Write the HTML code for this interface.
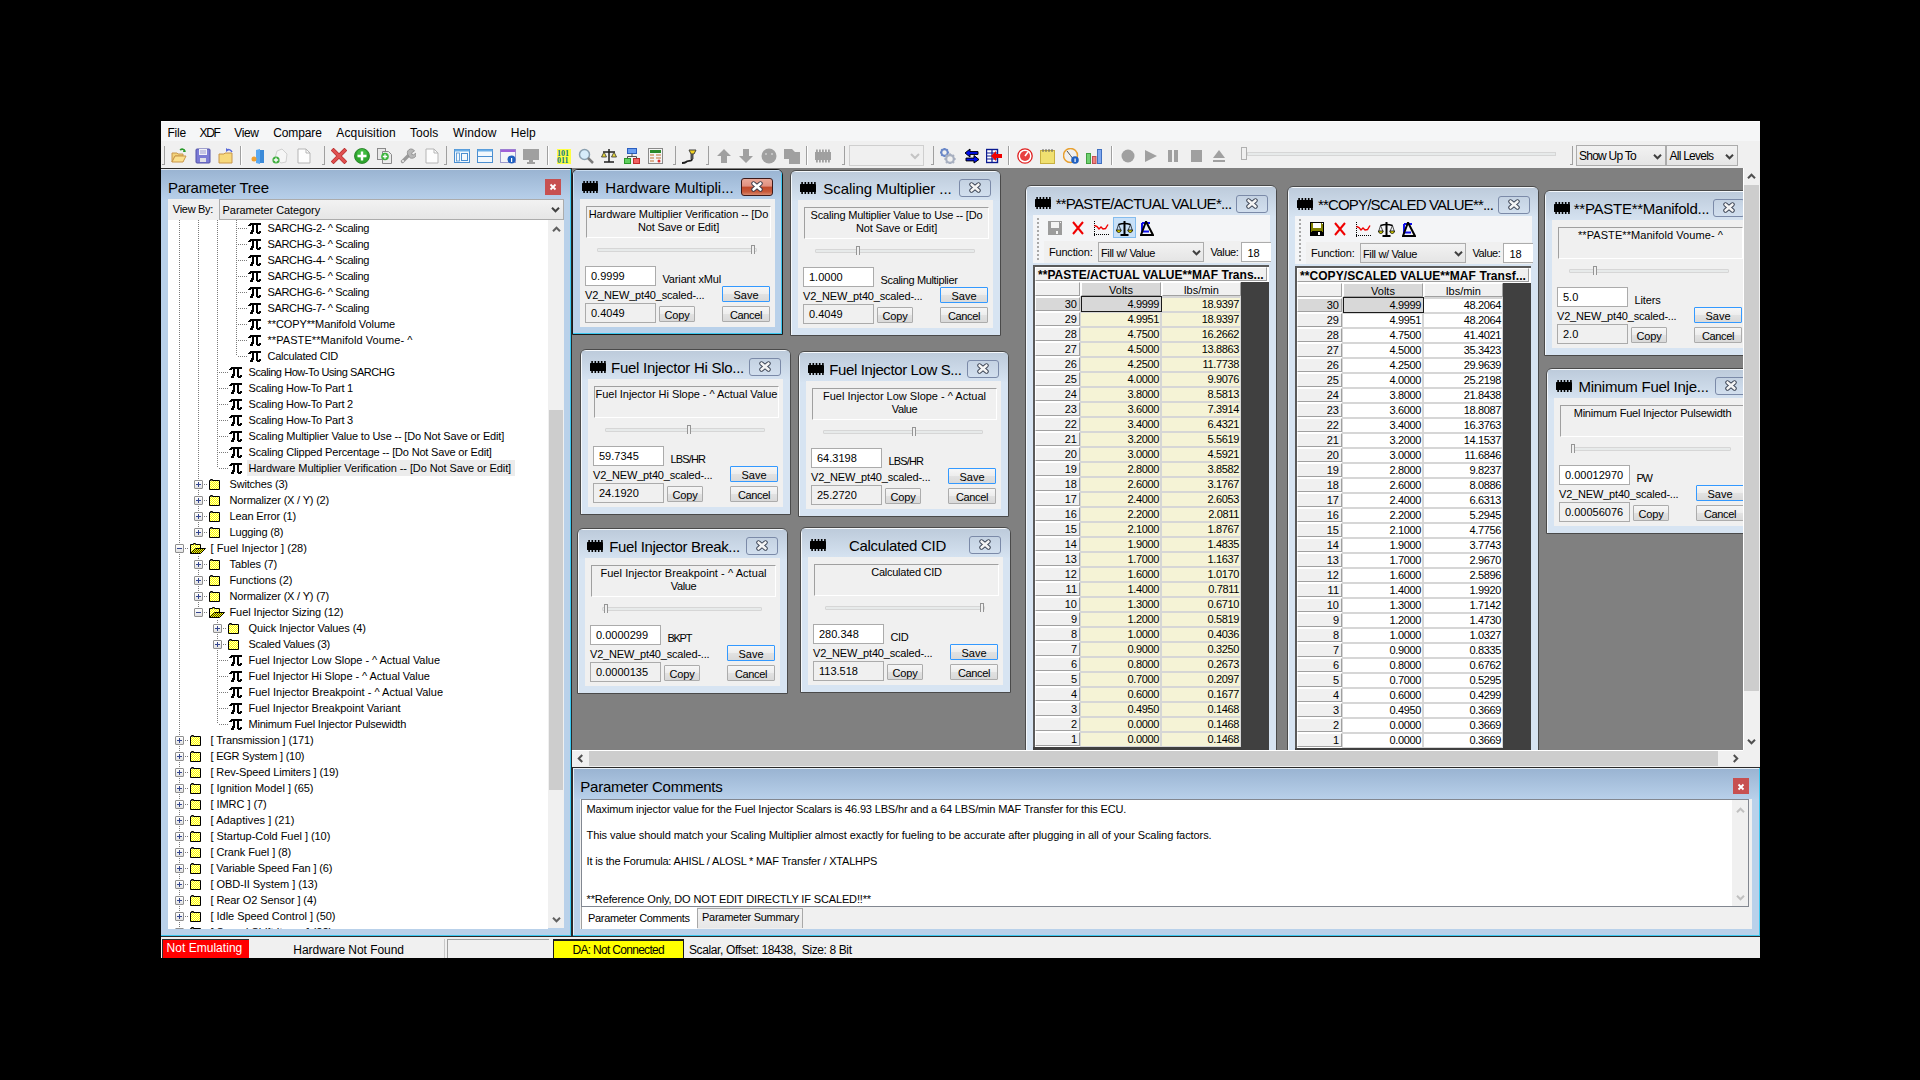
<!DOCTYPE html><html><head><meta charset="utf-8"><style>
html,body{margin:0;padding:0;width:1920px;height:1080px;overflow:hidden;background:#000}
div{position:absolute;box-sizing:border-box}
span{position:absolute;white-space:pre;font-family:"Liberation Sans",sans-serif;color:#000}
svg{position:absolute}
</style></head><body><div style="left:161px;top:121px;width:1599px;height:837px;background:#f0f0f0"></div><div style="left:161px;top:121px;width:1599px;height:20px;background:#f5f6f7;border-top:1px solid #fcfcfc"></div><span style="left:167.5px;top:127px;font-size:12px;line-height:12px;letter-spacing:-0.261px;">File</span><span style="left:199.6px;top:127px;font-size:12px;line-height:12px;letter-spacing:-1.333px;">XDF</span><span style="left:234.2px;top:127px;font-size:12px;line-height:12px;letter-spacing:-0.324px;">View</span><span style="left:273.3px;top:127px;font-size:12px;line-height:12px;letter-spacing:-0.137px;">Compare</span><span style="left:336.3px;top:127px;font-size:12px;line-height:12px;letter-spacing:0.134px;">Acquisition</span><span style="left:410px;top:127px;font-size:12px;line-height:12px;letter-spacing:0.057px;">Tools</span><span style="left:452.9px;top:127px;font-size:12px;line-height:12px;letter-spacing:0.185px;">Window</span><span style="left:510.8px;top:127px;font-size:12px;line-height:12px;letter-spacing:0.078px;">Help</span><div style="left:161px;top:141px;width:1599px;height:27px;background:#f0f0f0"></div><div style="left:240px;top:146px;width:1px;height:19px;background:#a0a0a0;border-right:1px solid #fff;width:2px"></div><div style="left:547px;top:146px;width:1px;height:19px;background:#a0a0a0;border-right:1px solid #fff;width:2px"></div><div style="left:806px;top:146px;width:1px;height:19px;background:#a0a0a0;border-right:1px solid #fff;width:2px"></div><div style="left:1008px;top:146px;width:1px;height:19px;background:#a0a0a0;border-right:1px solid #fff;width:2px"></div><div style="left:1111px;top:146px;width:1px;height:19px;background:#a0a0a0;border-right:1px solid #fff;width:2px"></div><div style="left:162px;top:146px;width:3px;height:19px;border-right:1px solid #a0a0a0;border-bottom:1px solid #a0a0a0"></div><div style="left:322px;top:146px;width:3px;height:19px;border-right:1px solid #a0a0a0;border-bottom:1px solid #a0a0a0"></div><div style="left:444px;top:146px;width:3px;height:19px;border-right:1px solid #a0a0a0;border-bottom:1px solid #a0a0a0"></div><div style="left:673px;top:146px;width:3px;height:19px;border-right:1px solid #a0a0a0;border-bottom:1px solid #a0a0a0"></div><div style="left:706px;top:146px;width:3px;height:19px;border-right:1px solid #a0a0a0;border-bottom:1px solid #a0a0a0"></div><div style="left:842px;top:146px;width:3px;height:19px;border-right:1px solid #a0a0a0;border-bottom:1px solid #a0a0a0"></div><div style="left:931px;top:146px;width:3px;height:19px;border-right:1px solid #a0a0a0;border-bottom:1px solid #a0a0a0"></div><div style="left:1570px;top:146px;width:3px;height:19px;border-right:1px solid #a0a0a0;border-bottom:1px solid #a0a0a0"></div><svg style="position:absolute;left:171px;top:148px;" width="16" height="16" viewBox="0 0 16 16"><path d="M1 5h5l1 1h5v2H4L1 14z" fill="#f3d37a" stroke="#c8964a"/><path d="M1 14l3-6h11l-3 6z" fill="#fbe08e" stroke="#c8964a"/><path d="M9 2c2-1.5 4-1 5 1" fill="none" stroke="#2a9a2a" stroke-width="1.5"/><path d="M13 1l2 3-3 0z" fill="#2a9a2a"/></svg><svg style="position:absolute;left:195px;top:148px;" width="16" height="16" viewBox="0 0 16 16"><rect x="1" y="1" width="14" height="14" rx="1" fill="#7b7bd6" stroke="#5151a8"/><rect x="4" y="1" width="8" height="6" fill="#f0f0f8"/><rect x="5" y="2.5" width="6" height="1" fill="#9a9ad0"/><rect x="5" y="4.5" width="6" height="1" fill="#9a9ad0"/><rect x="5" y="10" width="6" height="4" fill="#e0e0e8"/></svg><svg style="position:absolute;left:218px;top:148px;" width="16" height="16" viewBox="0 0 16 16"><path d="M1 6h5l1-1h7v10H1z" fill="#f7d97c" stroke="#c8964a"/><path d="M14 4c-1-2-3-3-5-2" fill="none" stroke="#5a6ad8" stroke-width="1.5"/><path d="M8 0l0 4 3-2z" fill="#5a6ad8"/></svg><svg style="position:absolute;left:250px;top:148px;" width="16" height="16" viewBox="0 0 16 16"><rect x="6" y="2" width="8" height="13" fill="#3c8ad8"/><path d="M6 2l4 -1v15l-4-1z" fill="#5aa8f0"/><circle cx="4" cy="11" r="2.5" fill="#f0a030"/></svg><svg style="position:absolute;left:272px;top:148px;" width="16" height="16" viewBox="0 0 16 16"><path d="M5 3l5-2 5 5-1 8-5 1-6-5z" fill="#f6f6f6" stroke="#d0d0d0"/><circle cx="4" cy="12" r="3.6" fill="#3fae3f"/><path d="M4 9.8v4.4M1.8 12h4.4" stroke="#fff" stroke-width="1.3"/></svg><svg style="position:absolute;left:296px;top:148px;" width="16" height="16" viewBox="0 0 16 16"><path d="M2 1h8l4 4v10H2z" fill="#fdfdfd" stroke="#b5b5b5"/><path d="M10 1v4h4" fill="none" stroke="#b5b5b5"/></svg><svg style="position:absolute;left:331px;top:148px;" width="16" height="16" viewBox="0 0 16 16"><path d="M2.5 2.5L13.5 13.5M13.5 2.5L2.5 13.5" stroke="#b83030" stroke-width="4" stroke-linecap="square"/><path d="M2.5 2.5L13.5 13.5M13.5 2.5L2.5 13.5" stroke="#e05050" stroke-width="2.6" stroke-linecap="square"/></svg><svg style="position:absolute;left:354px;top:148px;" width="16" height="16" viewBox="0 0 16 16"><circle cx="8" cy="8" r="7.5" fill="#2ea52e" stroke="#1f7a1f" stroke-width="0.8"/><circle cx="8" cy="6" r="5" fill="#4cc84c" opacity="0.6"/><path d="M8 3.5v9M3.5 8h9" stroke="#fff" stroke-width="2.4"/></svg><svg style="position:absolute;left:377px;top:148px;" width="16" height="16" viewBox="0 0 16 16"><rect x="0.5" y="0.5" width="8" height="11" fill="#e8e8e8" stroke="#8a8a8a"/><path d="M5.5 3.5h6l3 3v9h-9z" fill="#ececec" stroke="#8a8a8a"/><circle cx="8" cy="8.5" r="3.8" fill="#3cb43c"/><path d="M8 6.3v4.4M5.8 8.5h4.4" stroke="#fff" stroke-width="1.3"/></svg><svg style="position:absolute;left:400px;top:148px;" width="16" height="16" viewBox="0 0 16 16"><path d="M2.5 13.5L9 7" stroke="#9a9a9a" stroke-width="3.4" stroke-linecap="round"/><path d="M8.5 7.5a3.8 3.8 0 1 1 6-4.5l-2.6 1.6-0.2 1.8 1.8 0.4 2.3-1.6a3.8 3.8 0 0 1-7.3 2.3z" fill="#b8b8b8" stroke="#8a8a8a" stroke-width="0.8"/><circle cx="3" cy="13" r="1" fill="#f0f0f0"/></svg><svg style="position:absolute;left:424px;top:148px;" width="16" height="16" viewBox="0 0 16 16"><path d="M2 1h8l4 4v10H2z" fill="#fdfdfd" stroke="#b5b5b5"/><path d="M10 1v4h4" fill="none" stroke="#b5b5b5"/></svg><svg style="position:absolute;left:454px;top:148px;" width="16" height="16" viewBox="0 0 16 16"><rect x="0.5" y="1.5" width="15" height="13" fill="#f2f8fd" stroke="#4a8ed0"/><rect x="0.5" y="1.5" width="15" height="2" fill="#6aaee8"/><rect x="2.5" y="5" width="3" height="8" fill="none" stroke="#4a8ed0" stroke-width="0.8"/><rect x="7.5" y="5.5" width="6" height="7" fill="none" stroke="#4a8ed0"/></svg><svg style="position:absolute;left:477px;top:148px;" width="16" height="16" viewBox="0 0 16 16"><rect x="0.5" y="1.5" width="15" height="13" fill="#f2f8fd" stroke="#4a8ed0"/><rect x="0.5" y="1.5" width="15" height="2" fill="#6aaee8"/><path d="M0.5 8.5h15" stroke="#4a8ed0"/></svg><svg style="position:absolute;left:500px;top:148px;" width="16" height="16" viewBox="0 0 16 16"><rect x="0.5" y="1.5" width="15" height="13" fill="#f4f4f8" stroke="#9a9acc"/><rect x="0.5" y="1.5" width="15" height="2.5" fill="#a060d8"/><circle cx="11.5" cy="11.5" r="4" fill="#2060c0"/><rect x="11" y="10" width="1.2" height="4" fill="#fff"/></svg><svg style="position:absolute;left:523px;top:148px;" width="16" height="16" viewBox="0 0 16 16"><rect x="0" y="1" width="16" height="11" fill="#a0a0a0"/><rect x="6" y="12" width="4" height="2" fill="#a0a0a0"/><rect x="4" y="14" width="8" height="2" fill="#a0a0a0"/></svg><svg style="position:absolute;left:557px;top:148px;" width="16" height="16" viewBox="0 0 16 16"><rect x="0" y="1" width="14" height="15" fill="#ffff40"/><text x="0" y="7.5" font-family="Liberation Serif" font-size="8" font-weight="bold" fill="#0a7a8a">101</text><text x="0" y="15" font-family="Liberation Serif" font-size="8" font-weight="bold" fill="#0a7a8a">011</text></svg><svg style="position:absolute;left:578px;top:148px;" width="16" height="16" viewBox="0 0 16 16"><circle cx="6.5" cy="6.5" r="5" fill="#d6ecfa" stroke="#8aa0b0" stroke-width="1.5"/><path d="M10 10l5 5" stroke="#7a7a7a" stroke-width="2.5"/></svg><svg style="position:absolute;left:601px;top:148px;" width="16" height="16" viewBox="0 0 16 16"><path d="M8 1v13M3 14h10M2 4h12" stroke="#202020" stroke-width="1.5"/><path d="M0.5 9h5l-2.5-5z" fill="#e8d840" stroke="#303030" stroke-width="0.8"/><path d="M10.5 9h5l-2.5-5z" fill="#e8d840" stroke="#303030" stroke-width="0.8"/></svg><svg style="position:absolute;left:624px;top:148px;" width="16" height="16" viewBox="0 0 16 16"><rect x="3.5" y="0.5" width="9" height="5" fill="#6a9ef0" stroke="#2a5ec0"/><rect x="0.5" y="10.5" width="6" height="5" fill="#60d060" stroke="#2a9a2a"/><rect x="9.5" y="10.5" width="6" height="5" fill="#f06060" stroke="#c02a2a"/><path d="M8 5.5v3M3.5 8.5h9v2M3.5 8.5v2" fill="none" stroke="#505050"/></svg><svg style="position:absolute;left:648px;top:148px;" width="16" height="16" viewBox="0 0 16 16"><rect x="0.5" y="0.5" width="14" height="15" fill="#f4f4f4" stroke="#8a8a8a"/><rect x="2" y="2" width="11" height="3" fill="#2a8a2a"/><path d="M2 7h4M8 7h5M2 10h4M8 10h5M2 13h4" stroke="#c07030" stroke-width="1"/><circle cx="11" cy="13" r="1.5" fill="#e03030"/></svg><svg style="position:absolute;left:681px;top:148px;" width="17" height="16" viewBox="0 0 17 16"><path d="M8 2h7l-2 4h-3z" fill="#f0d020" stroke="#404040"/><path d="M11 6v5" stroke="#505050" stroke-width="3"/><path d="M11 11c0 3-4 1-6 3-1 1-3 1-4 1" fill="none" stroke="#202020" stroke-width="1.8"/></svg><svg style="position:absolute;left:716px;top:148px;" width="16" height="16" viewBox="0 0 16 16"><path d="M8 1l7 7h-4v7H5V8H1z" fill="#a0a0a0"/></svg><svg style="position:absolute;left:738px;top:148px;" width="16" height="16" viewBox="0 0 16 16"><path d="M8 15l7-7h-4V1H5v7H1z" fill="#a0a0a0"/></svg><svg style="position:absolute;left:761px;top:148px;" width="16" height="16" viewBox="0 0 16 16"><circle cx="8" cy="8" r="7.5" fill="#a0a0a0"/><circle cx="5" cy="6" r="0.8" fill="#f0f0f0"/><circle cx="11" cy="6" r="0.8" fill="#f0f0f0"/></svg><svg style="position:absolute;left:784px;top:148px;" width="16" height="16" viewBox="0 0 16 16"><path d="M0 1h8l3 3h5v12H5v-5H0z" fill="#a0a0a0"/></svg><svg style="position:absolute;left:815px;top:148px;" width="16" height="16" viewBox="0 0 16 16"><rect x="0" y="4" width="16" height="8" fill="#a0a0a0"/><rect x="1" y="1.5" width="1.8" height="13" fill="#a0a0a0"/><rect x="4" y="1.5" width="1.8" height="13" fill="#a0a0a0"/><rect x="7" y="1.5" width="1.8" height="13" fill="#a0a0a0"/><rect x="10" y="1.5" width="1.8" height="13" fill="#a0a0a0"/><rect x="13" y="1.5" width="1.8" height="13" fill="#a0a0a0"/></svg><div style="left:849px;top:145px;width:75px;height:21px;border:1px solid #cfcfcf;background:#f0f0f0"></div><svg style="position:absolute;left:909.0px;top:150.0px;" width="12" height="12" viewBox="0 0 12 12"><polyline points="2,4.0 6,8.0 10,4.0" fill="none" stroke="#c4c4c4" stroke-width="2"/></svg><svg style="position:absolute;left:940px;top:148px;" width="17" height="16" viewBox="0 0 17 16"><g transform="translate(4.5 4.5)"><circle r="3.2" fill="none" stroke="#6a88c8" stroke-width="2"/><rect x="-0.8" y="-4.6" width="1.6" height="1.8" fill="#6a88c8" transform="rotate(0)"/><rect x="-0.8" y="-4.6" width="1.6" height="1.8" fill="#6a88c8" transform="rotate(45)"/><rect x="-0.8" y="-4.6" width="1.6" height="1.8" fill="#6a88c8" transform="rotate(90)"/><rect x="-0.8" y="-4.6" width="1.6" height="1.8" fill="#6a88c8" transform="rotate(135)"/><rect x="-0.8" y="-4.6" width="1.6" height="1.8" fill="#6a88c8" transform="rotate(180)"/><rect x="-0.8" y="-4.6" width="1.6" height="1.8" fill="#6a88c8" transform="rotate(225)"/><rect x="-0.8" y="-4.6" width="1.6" height="1.8" fill="#6a88c8" transform="rotate(270)"/><rect x="-0.8" y="-4.6" width="1.6" height="1.8" fill="#6a88c8" transform="rotate(315)"/></g><g transform="translate(10 11)"><circle r="3.8" fill="none" stroke="#a8b0c0" stroke-width="2.2"/><rect x="-1" y="-5.6" width="2" height="2" fill="#a8b0c0" transform="rotate(0)"/><rect x="-1" y="-5.6" width="2" height="2" fill="#a8b0c0" transform="rotate(45)"/><rect x="-1" y="-5.6" width="2" height="2" fill="#a8b0c0" transform="rotate(90)"/><rect x="-1" y="-5.6" width="2" height="2" fill="#a8b0c0" transform="rotate(135)"/><rect x="-1" y="-5.6" width="2" height="2" fill="#a8b0c0" transform="rotate(180)"/><rect x="-1" y="-5.6" width="2" height="2" fill="#a8b0c0" transform="rotate(225)"/><rect x="-1" y="-5.6" width="2" height="2" fill="#a8b0c0" transform="rotate(270)"/><rect x="-1" y="-5.6" width="2" height="2" fill="#a8b0c0" transform="rotate(315)"/></g></svg><svg style="position:absolute;left:964px;top:148px;" width="16" height="16" viewBox="0 0 16 16"><path d="M1 5l5-4v2.6h8v2.8H6V9z" fill="#0010f0" stroke="#000" stroke-width="1"/><path d="M15 11.5l-5-4v2.6H2v2.8h8V15z" fill="#0010f0" stroke="#000" stroke-width="1"/></svg><svg style="position:absolute;left:986px;top:148px;" width="16" height="16" viewBox="0 0 16 16"><rect x="0.5" y="1.5" width="11" height="13" fill="#fff" stroke="#0a1a90" stroke-width="1.4"/><path d="M1 5h10M1 8h10M1 11h10M6 2v12" stroke="#0a1a90" stroke-width="1.2"/><path d="M5 8l5-5v3h6v4h-6v3z" fill="#f00000"/></svg><svg style="position:absolute;left:1017px;top:148px;" width="16" height="16" viewBox="0 0 16 16"><circle cx="8" cy="8" r="7.2" fill="#fff" stroke="#e02020" stroke-width="1.3"/><circle cx="8" cy="8" r="5" fill="#e84040"/><path d="M8 8l3-4" stroke="#fff" stroke-width="1.5"/></svg><svg style="position:absolute;left:1040px;top:148px;" width="16" height="16" viewBox="0 0 16 16"><rect x="0.5" y="2.5" width="14" height="13" fill="#f0e070" stroke="#c8b040"/><path d="M3 1v3M6 1v3M9 1v3M12 1v3" stroke="#606060"/></svg><svg style="position:absolute;left:1063px;top:148px;" width="16" height="16" viewBox="0 0 16 16"><circle cx="7.5" cy="7.5" r="7" fill="#f0f0f0" stroke="#e8a030" stroke-width="1.5"/><path d="M7.5 7.5L4 3M7.5 7.5l3 4" stroke="#505050"/><circle cx="12" cy="12" r="3.8" fill="#2060c0"/><rect x="11.5" y="10.5" width="1.2" height="3.5" fill="#fff"/></svg><svg style="position:absolute;left:1086px;top:148px;" width="16" height="16" viewBox="0 0 16 16"><rect x="0.5" y="5.5" width="4" height="10" fill="#70d070" stroke="#40a040"/><rect x="6.5" y="8.5" width="3.5" height="7" fill="#f08080" stroke="#c05050"/><rect x="11.5" y="1.5" width="4" height="14" fill="#80a8f0" stroke="#4070c0"/></svg><svg style="position:absolute;left:1121px;top:148px;" width="16" height="16" viewBox="0 0 16 16"><circle cx="7" cy="8" r="6.5" fill="#a0a0a0"/></svg><svg style="position:absolute;left:1144px;top:148px;" width="16" height="16" viewBox="0 0 16 16"><path d="M1 2l12 6-12 6z" fill="#a0a0a0"/></svg><svg style="position:absolute;left:1167px;top:148px;" width="16" height="16" viewBox="0 0 16 16"><rect x="1" y="2" width="4" height="12" fill="#a0a0a0"/><rect x="7" y="2" width="4" height="12" fill="#a0a0a0"/></svg><svg style="position:absolute;left:1191px;top:148px;" width="16" height="16" viewBox="0 0 16 16"><rect x="0" y="2" width="11" height="12" fill="#a0a0a0"/></svg><svg style="position:absolute;left:1212px;top:148px;" width="16" height="16" viewBox="0 0 16 16"><path d="M1 10l6-8 6 8z" fill="#a0a0a0"/><rect x="1" y="12" width="12" height="2" fill="#a0a0a0"/></svg><div style="left:1247px;top:152px;width:309px;height:4px;background:#e7eaea;border:1px solid #d6d6d6"></div><div style="left:1241px;top:147px;width:6px;height:13px;background:#f0f0f0;border:1px solid #b0b0b0"></div><div style="left:1576px;top:145px;width:90px;height:21px;border:1px solid #acacac;background:linear-gradient(#f2f2f2,#e5e5e5)"></div><span style="left:1579px;top:150px;font-size:12px;line-height:12px;letter-spacing:-0.748px;">Show Up To</span><svg style="position:absolute;left:1651.5px;top:150.5px;" width="11.0" height="11.0" viewBox="0 0 11.0 11.0"><polyline points="2,3.75 5.5,7.25 9.0,3.75" fill="none" stroke="#404040" stroke-width="2"/></svg><div style="left:1666px;top:145px;width:72px;height:21px;border:1px solid #acacac;background:linear-gradient(#f2f2f2,#e5e5e5)"></div><span style="left:1669.6px;top:150px;font-size:12px;line-height:12px;letter-spacing:-0.766px;">All Levels</span><svg style="position:absolute;left:1723.5px;top:150.5px;" width="11.0" height="11.0" viewBox="0 0 11.0 11.0"><polyline points="2,3.75 5.5,7.25 9.0,3.75" fill="none" stroke="#404040" stroke-width="2"/></svg><div style="left:161px;top:169px;width:411px;height:767px;background:#b9d1ea"></div><div style="left:161px;top:169px;width:411px;height:31px;background:linear-gradient(#9ab4d2,#b8d0ea);border-top:1px solid #e4ecf6"></div><div style="left:570px;top:169px;width:1px;height:767px;background:#3cc8f0"></div><div style="left:161px;top:935px;width:411px;height:1px;background:#3cc8f0"></div><div style="left:571px;top:168px;width:2px;height:768px;background:#2a2a2a"></div><div style="left:161px;top:936px;width:411px;height:1px;background:#2a2a2a"></div><div style="left:161px;top:168px;width:411px;height:1px;background:#2a2a2a"></div><span style="left:168px;top:180px;font-size:15px;line-height:15px;letter-spacing:-0.248px;">Parameter Tree</span><div style="left:545px;top:179px;width:16px;height:16px;background:#c75050"></div><svg style="position:absolute;left:549px;top:183px;" width="8" height="8" viewBox="0 0 8 8"><path d="M1.5 1.5l5 5M6.5 1.5l-5 5" stroke="#fff" stroke-width="1.8"/></svg><div style="left:168px;top:199px;width:396px;height:21px;background:#f0f0f0"></div><span style="left:172.8px;top:204px;font-size:11px;line-height:11px;letter-spacing:-0.287px;">View By:</span><div style="left:219px;top:199px;width:345px;height:21px;border:1px solid #acacac;background:linear-gradient(#f2f2f2,#e6e6e6)"></div><span style="left:222.6px;top:204.5px;font-size:11px;line-height:11px;letter-spacing:-0.086px;">Parameter Category</span><svg style="position:absolute;left:550.0px;top:204.0px;" width="11.0" height="11.0" viewBox="0 0 11.0 11.0"><polyline points="2,3.75 5.5,7.25 9.0,3.75" fill="none" stroke="#404040" stroke-width="2"/></svg><div style="left:168px;top:220px;width:380px;height:709px;background:#fff;overflow:hidden"><div style="left:11px;top:0px;width:1px;height:708px;background:repeating-linear-gradient(to bottom,#7a7a7a 0,#7a7a7a 1px,transparent 1px,transparent 2px)"></div><div style="left:30px;top:0px;width:1px;height:312px;background:repeating-linear-gradient(to bottom,#7a7a7a 0,#7a7a7a 1px,transparent 1px,transparent 2px)"></div><div style="left:30px;top:336px;width:1px;height:56px;background:repeating-linear-gradient(to bottom,#7a7a7a 0,#7a7a7a 1px,transparent 1px,transparent 2px)"></div><div style="left:49px;top:0px;width:1px;height:248px;background:repeating-linear-gradient(to bottom,#7a7a7a 0,#7a7a7a 1px,transparent 1px,transparent 2px)"></div><div style="left:49px;top:400px;width:1px;height:104px;background:repeating-linear-gradient(to bottom,#7a7a7a 0,#7a7a7a 1px,transparent 1px,transparent 2px)"></div><div style="left:68px;top:0px;width:1px;height:136px;background:repeating-linear-gradient(to bottom,#7a7a7a 0,#7a7a7a 1px,transparent 1px,transparent 2px)"></div><div style="left:70px;top:8px;width:9px;height:1px;background:repeating-linear-gradient(to right,#7a7a7a 0,#7a7a7a 1px,transparent 1px,transparent 2px)"></div><svg style="position:absolute;left:80px;top:2px;shape-rendering:crispEdges" width="14" height="13" viewBox="0 0 14 13"><g fill="#000" shape-rendering="crispEdges"><rect x="2" y="1" width="11" height="2"/><rect x="1" y="2" width="2" height="1"/><rect x="0" y="3" width="3" height="1"/><rect x="4" y="3" width="2" height="5"/><rect x="3" y="8" width="3" height="2"/><rect x="2" y="10" width="3" height="2"/><rect x="8" y="3" width="2" height="8"/><rect x="9" y="10" width="3" height="2"/><rect x="11" y="9" width="2" height="2"/></g></svg><span style="left:99.5px;top:3px;font-size:11px;line-height:11px;letter-spacing:-0.335px;">SARCHG-2- ^ Scaling</span><div style="left:70px;top:24px;width:9px;height:1px;background:repeating-linear-gradient(to right,#7a7a7a 0,#7a7a7a 1px,transparent 1px,transparent 2px)"></div><svg style="position:absolute;left:80px;top:18px;shape-rendering:crispEdges" width="14" height="13" viewBox="0 0 14 13"><g fill="#000" shape-rendering="crispEdges"><rect x="2" y="1" width="11" height="2"/><rect x="1" y="2" width="2" height="1"/><rect x="0" y="3" width="3" height="1"/><rect x="4" y="3" width="2" height="5"/><rect x="3" y="8" width="3" height="2"/><rect x="2" y="10" width="3" height="2"/><rect x="8" y="3" width="2" height="8"/><rect x="9" y="10" width="3" height="2"/><rect x="11" y="9" width="2" height="2"/></g></svg><span style="left:99.5px;top:19px;font-size:11px;line-height:11px;letter-spacing:-0.335px;">SARCHG-3- ^ Scaling</span><div style="left:70px;top:40px;width:9px;height:1px;background:repeating-linear-gradient(to right,#7a7a7a 0,#7a7a7a 1px,transparent 1px,transparent 2px)"></div><svg style="position:absolute;left:80px;top:34px;shape-rendering:crispEdges" width="14" height="13" viewBox="0 0 14 13"><g fill="#000" shape-rendering="crispEdges"><rect x="2" y="1" width="11" height="2"/><rect x="1" y="2" width="2" height="1"/><rect x="0" y="3" width="3" height="1"/><rect x="4" y="3" width="2" height="5"/><rect x="3" y="8" width="3" height="2"/><rect x="2" y="10" width="3" height="2"/><rect x="8" y="3" width="2" height="8"/><rect x="9" y="10" width="3" height="2"/><rect x="11" y="9" width="2" height="2"/></g></svg><span style="left:99.5px;top:35px;font-size:11px;line-height:11px;letter-spacing:-0.335px;">SARCHG-4- ^ Scaling</span><div style="left:70px;top:56px;width:9px;height:1px;background:repeating-linear-gradient(to right,#7a7a7a 0,#7a7a7a 1px,transparent 1px,transparent 2px)"></div><svg style="position:absolute;left:80px;top:50px;shape-rendering:crispEdges" width="14" height="13" viewBox="0 0 14 13"><g fill="#000" shape-rendering="crispEdges"><rect x="2" y="1" width="11" height="2"/><rect x="1" y="2" width="2" height="1"/><rect x="0" y="3" width="3" height="1"/><rect x="4" y="3" width="2" height="5"/><rect x="3" y="8" width="3" height="2"/><rect x="2" y="10" width="3" height="2"/><rect x="8" y="3" width="2" height="8"/><rect x="9" y="10" width="3" height="2"/><rect x="11" y="9" width="2" height="2"/></g></svg><span style="left:99.5px;top:51px;font-size:11px;line-height:11px;letter-spacing:-0.335px;">SARCHG-5- ^ Scaling</span><div style="left:70px;top:72px;width:9px;height:1px;background:repeating-linear-gradient(to right,#7a7a7a 0,#7a7a7a 1px,transparent 1px,transparent 2px)"></div><svg style="position:absolute;left:80px;top:66px;shape-rendering:crispEdges" width="14" height="13" viewBox="0 0 14 13"><g fill="#000" shape-rendering="crispEdges"><rect x="2" y="1" width="11" height="2"/><rect x="1" y="2" width="2" height="1"/><rect x="0" y="3" width="3" height="1"/><rect x="4" y="3" width="2" height="5"/><rect x="3" y="8" width="3" height="2"/><rect x="2" y="10" width="3" height="2"/><rect x="8" y="3" width="2" height="8"/><rect x="9" y="10" width="3" height="2"/><rect x="11" y="9" width="2" height="2"/></g></svg><span style="left:99.5px;top:67px;font-size:11px;line-height:11px;letter-spacing:-0.335px;">SARCHG-6- ^ Scaling</span><div style="left:70px;top:88px;width:9px;height:1px;background:repeating-linear-gradient(to right,#7a7a7a 0,#7a7a7a 1px,transparent 1px,transparent 2px)"></div><svg style="position:absolute;left:80px;top:82px;shape-rendering:crispEdges" width="14" height="13" viewBox="0 0 14 13"><g fill="#000" shape-rendering="crispEdges"><rect x="2" y="1" width="11" height="2"/><rect x="1" y="2" width="2" height="1"/><rect x="0" y="3" width="3" height="1"/><rect x="4" y="3" width="2" height="5"/><rect x="3" y="8" width="3" height="2"/><rect x="2" y="10" width="3" height="2"/><rect x="8" y="3" width="2" height="8"/><rect x="9" y="10" width="3" height="2"/><rect x="11" y="9" width="2" height="2"/></g></svg><span style="left:99.5px;top:83px;font-size:11px;line-height:11px;letter-spacing:-0.335px;">SARCHG-7- ^ Scaling</span><div style="left:70px;top:104px;width:9px;height:1px;background:repeating-linear-gradient(to right,#7a7a7a 0,#7a7a7a 1px,transparent 1px,transparent 2px)"></div><svg style="position:absolute;left:80px;top:98px;shape-rendering:crispEdges" width="14" height="13" viewBox="0 0 14 13"><g fill="#000" shape-rendering="crispEdges"><rect x="2" y="1" width="11" height="2"/><rect x="1" y="2" width="2" height="1"/><rect x="0" y="3" width="3" height="1"/><rect x="4" y="3" width="2" height="5"/><rect x="3" y="8" width="3" height="2"/><rect x="2" y="10" width="3" height="2"/><rect x="8" y="3" width="2" height="8"/><rect x="9" y="10" width="3" height="2"/><rect x="11" y="9" width="2" height="2"/></g></svg><span style="left:99.5px;top:99px;font-size:11px;line-height:11px;letter-spacing:-0.092px;">**COPY**Manifold Volume</span><div style="left:70px;top:120px;width:9px;height:1px;background:repeating-linear-gradient(to right,#7a7a7a 0,#7a7a7a 1px,transparent 1px,transparent 2px)"></div><svg style="position:absolute;left:80px;top:114px;shape-rendering:crispEdges" width="14" height="13" viewBox="0 0 14 13"><g fill="#000" shape-rendering="crispEdges"><rect x="2" y="1" width="11" height="2"/><rect x="1" y="2" width="2" height="1"/><rect x="0" y="3" width="3" height="1"/><rect x="4" y="3" width="2" height="5"/><rect x="3" y="8" width="3" height="2"/><rect x="2" y="10" width="3" height="2"/><rect x="8" y="3" width="2" height="8"/><rect x="9" y="10" width="3" height="2"/><rect x="11" y="9" width="2" height="2"/></g></svg><span style="left:99.5px;top:115px;font-size:11px;line-height:11px;letter-spacing:0.072px;">**PASTE**Manifold Voume- ^</span><div style="left:70px;top:136px;width:9px;height:1px;background:repeating-linear-gradient(to right,#7a7a7a 0,#7a7a7a 1px,transparent 1px,transparent 2px)"></div><svg style="position:absolute;left:80px;top:130px;shape-rendering:crispEdges" width="14" height="13" viewBox="0 0 14 13"><g fill="#000" shape-rendering="crispEdges"><rect x="2" y="1" width="11" height="2"/><rect x="1" y="2" width="2" height="1"/><rect x="0" y="3" width="3" height="1"/><rect x="4" y="3" width="2" height="5"/><rect x="3" y="8" width="3" height="2"/><rect x="2" y="10" width="3" height="2"/><rect x="8" y="3" width="2" height="8"/><rect x="9" y="10" width="3" height="2"/><rect x="11" y="9" width="2" height="2"/></g></svg><span style="left:99.5px;top:131px;font-size:11px;line-height:11px;letter-spacing:-0.249px;">Calculated CID</span><div style="left:51px;top:152px;width:9px;height:1px;background:repeating-linear-gradient(to right,#7a7a7a 0,#7a7a7a 1px,transparent 1px,transparent 2px)"></div><svg style="position:absolute;left:61px;top:146px;shape-rendering:crispEdges" width="14" height="13" viewBox="0 0 14 13"><g fill="#000" shape-rendering="crispEdges"><rect x="2" y="1" width="11" height="2"/><rect x="1" y="2" width="2" height="1"/><rect x="0" y="3" width="3" height="1"/><rect x="4" y="3" width="2" height="5"/><rect x="3" y="8" width="3" height="2"/><rect x="2" y="10" width="3" height="2"/><rect x="8" y="3" width="2" height="8"/><rect x="9" y="10" width="3" height="2"/><rect x="11" y="9" width="2" height="2"/></g></svg><span style="left:80.5px;top:147px;font-size:11px;line-height:11px;letter-spacing:-0.434px;">Scaling How-To Using SARCHG</span><div style="left:51px;top:168px;width:9px;height:1px;background:repeating-linear-gradient(to right,#7a7a7a 0,#7a7a7a 1px,transparent 1px,transparent 2px)"></div><svg style="position:absolute;left:61px;top:162px;shape-rendering:crispEdges" width="14" height="13" viewBox="0 0 14 13"><g fill="#000" shape-rendering="crispEdges"><rect x="2" y="1" width="11" height="2"/><rect x="1" y="2" width="2" height="1"/><rect x="0" y="3" width="3" height="1"/><rect x="4" y="3" width="2" height="5"/><rect x="3" y="8" width="3" height="2"/><rect x="2" y="10" width="3" height="2"/><rect x="8" y="3" width="2" height="8"/><rect x="9" y="10" width="3" height="2"/><rect x="11" y="9" width="2" height="2"/></g></svg><span style="left:80.5px;top:163px;font-size:11px;line-height:11px;letter-spacing:-0.206px;">Scaling How-To Part 1</span><div style="left:51px;top:184px;width:9px;height:1px;background:repeating-linear-gradient(to right,#7a7a7a 0,#7a7a7a 1px,transparent 1px,transparent 2px)"></div><svg style="position:absolute;left:61px;top:178px;shape-rendering:crispEdges" width="14" height="13" viewBox="0 0 14 13"><g fill="#000" shape-rendering="crispEdges"><rect x="2" y="1" width="11" height="2"/><rect x="1" y="2" width="2" height="1"/><rect x="0" y="3" width="3" height="1"/><rect x="4" y="3" width="2" height="5"/><rect x="3" y="8" width="3" height="2"/><rect x="2" y="10" width="3" height="2"/><rect x="8" y="3" width="2" height="8"/><rect x="9" y="10" width="3" height="2"/><rect x="11" y="9" width="2" height="2"/></g></svg><span style="left:80.5px;top:179px;font-size:11px;line-height:11px;letter-spacing:-0.206px;">Scaling How-To Part 2</span><div style="left:51px;top:200px;width:9px;height:1px;background:repeating-linear-gradient(to right,#7a7a7a 0,#7a7a7a 1px,transparent 1px,transparent 2px)"></div><svg style="position:absolute;left:61px;top:194px;shape-rendering:crispEdges" width="14" height="13" viewBox="0 0 14 13"><g fill="#000" shape-rendering="crispEdges"><rect x="2" y="1" width="11" height="2"/><rect x="1" y="2" width="2" height="1"/><rect x="0" y="3" width="3" height="1"/><rect x="4" y="3" width="2" height="5"/><rect x="3" y="8" width="3" height="2"/><rect x="2" y="10" width="3" height="2"/><rect x="8" y="3" width="2" height="8"/><rect x="9" y="10" width="3" height="2"/><rect x="11" y="9" width="2" height="2"/></g></svg><span style="left:80.5px;top:195px;font-size:11px;line-height:11px;letter-spacing:-0.206px;">Scaling How-To Part 3</span><div style="left:51px;top:216px;width:9px;height:1px;background:repeating-linear-gradient(to right,#7a7a7a 0,#7a7a7a 1px,transparent 1px,transparent 2px)"></div><svg style="position:absolute;left:61px;top:210px;shape-rendering:crispEdges" width="14" height="13" viewBox="0 0 14 13"><g fill="#000" shape-rendering="crispEdges"><rect x="2" y="1" width="11" height="2"/><rect x="1" y="2" width="2" height="1"/><rect x="0" y="3" width="3" height="1"/><rect x="4" y="3" width="2" height="5"/><rect x="3" y="8" width="3" height="2"/><rect x="2" y="10" width="3" height="2"/><rect x="8" y="3" width="2" height="8"/><rect x="9" y="10" width="3" height="2"/><rect x="11" y="9" width="2" height="2"/></g></svg><span style="left:80.5px;top:211px;font-size:11px;line-height:11px;letter-spacing:-0.170px;">Scaling Multiplier Value to Use -- [Do Not Save or Edit]</span><div style="left:51px;top:232px;width:9px;height:1px;background:repeating-linear-gradient(to right,#7a7a7a 0,#7a7a7a 1px,transparent 1px,transparent 2px)"></div><svg style="position:absolute;left:61px;top:226px;shape-rendering:crispEdges" width="14" height="13" viewBox="0 0 14 13"><g fill="#000" shape-rendering="crispEdges"><rect x="2" y="1" width="11" height="2"/><rect x="1" y="2" width="2" height="1"/><rect x="0" y="3" width="3" height="1"/><rect x="4" y="3" width="2" height="5"/><rect x="3" y="8" width="3" height="2"/><rect x="2" y="10" width="3" height="2"/><rect x="8" y="3" width="2" height="8"/><rect x="9" y="10" width="3" height="2"/><rect x="11" y="9" width="2" height="2"/></g></svg><span style="left:80.5px;top:227px;font-size:11px;line-height:11px;letter-spacing:-0.183px;">Scaling Clipped Percentage -- [Do Not Save or Edit]</span><div style="left:51px;top:248px;width:9px;height:1px;background:repeating-linear-gradient(to right,#7a7a7a 0,#7a7a7a 1px,transparent 1px,transparent 2px)"></div><svg style="position:absolute;left:61px;top:242px;shape-rendering:crispEdges" width="14" height="13" viewBox="0 0 14 13"><g fill="#000" shape-rendering="crispEdges"><rect x="2" y="1" width="11" height="2"/><rect x="1" y="2" width="2" height="1"/><rect x="0" y="3" width="3" height="1"/><rect x="4" y="3" width="2" height="5"/><rect x="3" y="8" width="3" height="2"/><rect x="2" y="10" width="3" height="2"/><rect x="8" y="3" width="2" height="8"/><rect x="9" y="10" width="3" height="2"/><rect x="11" y="9" width="2" height="2"/></g></svg><div style="left:79px;top:240px;width:268px;height:16px;background:#ececec"></div><span style="left:80.5px;top:243px;font-size:11px;line-height:11px;letter-spacing:-0.102px;">Hardware Multiplier Verification -- [Do Not Save or Edit]</span><div style="left:26px;top:260px;width:9px;height:9px;border:1px solid #8f8f8f;background:linear-gradient(#fff,#e2e2e2);border-radius:1px"></div><div style="left:28px;top:264px;width:5px;height:1px;background:#34468f"></div><div style="left:30px;top:262px;width:1px;height:5px;background:#34468f"></div><div style="left:36px;top:264px;width:4px;height:1px;background:repeating-linear-gradient(to right,#7a7a7a 0,#7a7a7a 1px,transparent 1px,transparent 2px)"></div><svg style="position:absolute;left:40px;top:257px;" width="14" height="14" viewBox="0 0 14 14"><defs><pattern id="dith" width="2" height="2" patternUnits="userSpaceOnUse"><rect width="2" height="2" fill="#ffff00"/><rect width="1" height="1" fill="#ffffc0"/><rect x="1" y="1" width="1" height="1" fill="#ffffc0"/></pattern></defs><path d="M1.5 12.5V3.5h10v9z" fill="url(#dith)" stroke="#000"/><path d="M2.5 3.5V2.5h2v1" fill="#ffffc0" stroke="#000"/></svg><span style="left:61.5px;top:259px;font-size:11px;line-height:11px;letter-spacing:-0.186px;">Switches (3)</span><div style="left:26px;top:276px;width:9px;height:9px;border:1px solid #8f8f8f;background:linear-gradient(#fff,#e2e2e2);border-radius:1px"></div><div style="left:28px;top:280px;width:5px;height:1px;background:#34468f"></div><div style="left:30px;top:278px;width:1px;height:5px;background:#34468f"></div><div style="left:36px;top:280px;width:4px;height:1px;background:repeating-linear-gradient(to right,#7a7a7a 0,#7a7a7a 1px,transparent 1px,transparent 2px)"></div><svg style="position:absolute;left:40px;top:273px;" width="14" height="14" viewBox="0 0 14 14"><defs><pattern id="dith" width="2" height="2" patternUnits="userSpaceOnUse"><rect width="2" height="2" fill="#ffff00"/><rect width="1" height="1" fill="#ffffc0"/><rect x="1" y="1" width="1" height="1" fill="#ffffc0"/></pattern></defs><path d="M1.5 12.5V3.5h10v9z" fill="url(#dith)" stroke="#000"/><path d="M2.5 3.5V2.5h2v1" fill="#ffffc0" stroke="#000"/></svg><span style="left:61.5px;top:275px;font-size:11px;line-height:11px;letter-spacing:-0.191px;">Normalizer (X / Y) (2)</span><div style="left:26px;top:292px;width:9px;height:9px;border:1px solid #8f8f8f;background:linear-gradient(#fff,#e2e2e2);border-radius:1px"></div><div style="left:28px;top:296px;width:5px;height:1px;background:#34468f"></div><div style="left:30px;top:294px;width:1px;height:5px;background:#34468f"></div><div style="left:36px;top:296px;width:4px;height:1px;background:repeating-linear-gradient(to right,#7a7a7a 0,#7a7a7a 1px,transparent 1px,transparent 2px)"></div><svg style="position:absolute;left:40px;top:289px;" width="14" height="14" viewBox="0 0 14 14"><defs><pattern id="dith" width="2" height="2" patternUnits="userSpaceOnUse"><rect width="2" height="2" fill="#ffff00"/><rect width="1" height="1" fill="#ffffc0"/><rect x="1" y="1" width="1" height="1" fill="#ffffc0"/></pattern></defs><path d="M1.5 12.5V3.5h10v9z" fill="url(#dith)" stroke="#000"/><path d="M2.5 3.5V2.5h2v1" fill="#ffffc0" stroke="#000"/></svg><span style="left:61.5px;top:291px;font-size:11px;line-height:11px;letter-spacing:-0.135px;">Lean Error (1)</span><div style="left:26px;top:308px;width:9px;height:9px;border:1px solid #8f8f8f;background:linear-gradient(#fff,#e2e2e2);border-radius:1px"></div><div style="left:28px;top:312px;width:5px;height:1px;background:#34468f"></div><div style="left:30px;top:310px;width:1px;height:5px;background:#34468f"></div><div style="left:36px;top:312px;width:4px;height:1px;background:repeating-linear-gradient(to right,#7a7a7a 0,#7a7a7a 1px,transparent 1px,transparent 2px)"></div><svg style="position:absolute;left:40px;top:305px;" width="14" height="14" viewBox="0 0 14 14"><defs><pattern id="dith" width="2" height="2" patternUnits="userSpaceOnUse"><rect width="2" height="2" fill="#ffff00"/><rect width="1" height="1" fill="#ffffc0"/><rect x="1" y="1" width="1" height="1" fill="#ffffc0"/></pattern></defs><path d="M1.5 12.5V3.5h10v9z" fill="url(#dith)" stroke="#000"/><path d="M2.5 3.5V2.5h2v1" fill="#ffffc0" stroke="#000"/></svg><span style="left:61.5px;top:307px;font-size:11px;line-height:11px;letter-spacing:-0.178px;">Lugging (8)</span><div style="left:7px;top:324px;width:9px;height:9px;border:1px solid #8f8f8f;background:linear-gradient(#fff,#e2e2e2);border-radius:1px"></div><div style="left:9px;top:328px;width:5px;height:1px;background:#34468f"></div><div style="left:17px;top:328px;width:4px;height:1px;background:repeating-linear-gradient(to right,#7a7a7a 0,#7a7a7a 1px,transparent 1px,transparent 2px)"></div><svg style="position:absolute;left:21px;top:322px;" width="18" height="13" viewBox="0 0 18 13"><defs><pattern id="dith2" width="2" height="2" patternUnits="userSpaceOnUse"><rect width="2" height="2" fill="#ffff00"/><rect width="1" height="1" fill="#404000"/><rect x="1" y="1" width="1" height="1" fill="#404000"/></pattern></defs><path d="M1.5 11.5V2.5h3v-1h2v1h5v4" fill="url(#dith)" stroke="#000"/><path d="M1.5 11.5h10l5-5h-10z" fill="url(#dith2)" stroke="#000"/></svg><span style="left:42.5px;top:323px;font-size:11px;line-height:11px;letter-spacing:0.051px;">[ Fuel Injector ] (28)</span><div style="left:26px;top:340px;width:9px;height:9px;border:1px solid #8f8f8f;background:linear-gradient(#fff,#e2e2e2);border-radius:1px"></div><div style="left:28px;top:344px;width:5px;height:1px;background:#34468f"></div><div style="left:30px;top:342px;width:1px;height:5px;background:#34468f"></div><div style="left:36px;top:344px;width:4px;height:1px;background:repeating-linear-gradient(to right,#7a7a7a 0,#7a7a7a 1px,transparent 1px,transparent 2px)"></div><svg style="position:absolute;left:40px;top:337px;" width="14" height="14" viewBox="0 0 14 14"><defs><pattern id="dith" width="2" height="2" patternUnits="userSpaceOnUse"><rect width="2" height="2" fill="#ffff00"/><rect width="1" height="1" fill="#ffffc0"/><rect x="1" y="1" width="1" height="1" fill="#ffffc0"/></pattern></defs><path d="M1.5 12.5V3.5h10v9z" fill="url(#dith)" stroke="#000"/><path d="M2.5 3.5V2.5h2v1" fill="#ffffc0" stroke="#000"/></svg><span style="left:61.5px;top:339px;font-size:11px;line-height:11px;letter-spacing:-0.060px;">Tables (7)</span><div style="left:26px;top:356px;width:9px;height:9px;border:1px solid #8f8f8f;background:linear-gradient(#fff,#e2e2e2);border-radius:1px"></div><div style="left:28px;top:360px;width:5px;height:1px;background:#34468f"></div><div style="left:30px;top:358px;width:1px;height:5px;background:#34468f"></div><div style="left:36px;top:360px;width:4px;height:1px;background:repeating-linear-gradient(to right,#7a7a7a 0,#7a7a7a 1px,transparent 1px,transparent 2px)"></div><svg style="position:absolute;left:40px;top:353px;" width="14" height="14" viewBox="0 0 14 14"><defs><pattern id="dith" width="2" height="2" patternUnits="userSpaceOnUse"><rect width="2" height="2" fill="#ffff00"/><rect width="1" height="1" fill="#ffffc0"/><rect x="1" y="1" width="1" height="1" fill="#ffffc0"/></pattern></defs><path d="M1.5 12.5V3.5h10v9z" fill="url(#dith)" stroke="#000"/><path d="M2.5 3.5V2.5h2v1" fill="#ffffc0" stroke="#000"/></svg><span style="left:61.5px;top:355px;font-size:11px;line-height:11px;letter-spacing:-0.116px;">Functions (2)</span><div style="left:26px;top:372px;width:9px;height:9px;border:1px solid #8f8f8f;background:linear-gradient(#fff,#e2e2e2);border-radius:1px"></div><div style="left:28px;top:376px;width:5px;height:1px;background:#34468f"></div><div style="left:30px;top:374px;width:1px;height:5px;background:#34468f"></div><div style="left:36px;top:376px;width:4px;height:1px;background:repeating-linear-gradient(to right,#7a7a7a 0,#7a7a7a 1px,transparent 1px,transparent 2px)"></div><svg style="position:absolute;left:40px;top:369px;" width="14" height="14" viewBox="0 0 14 14"><defs><pattern id="dith" width="2" height="2" patternUnits="userSpaceOnUse"><rect width="2" height="2" fill="#ffff00"/><rect width="1" height="1" fill="#ffffc0"/><rect x="1" y="1" width="1" height="1" fill="#ffffc0"/></pattern></defs><path d="M1.5 12.5V3.5h10v9z" fill="url(#dith)" stroke="#000"/><path d="M2.5 3.5V2.5h2v1" fill="#ffffc0" stroke="#000"/></svg><span style="left:61.5px;top:371px;font-size:11px;line-height:11px;letter-spacing:-0.191px;">Normalizer (X / Y) (7)</span><div style="left:26px;top:388px;width:9px;height:9px;border:1px solid #8f8f8f;background:linear-gradient(#fff,#e2e2e2);border-radius:1px"></div><div style="left:28px;top:392px;width:5px;height:1px;background:#34468f"></div><div style="left:36px;top:392px;width:4px;height:1px;background:repeating-linear-gradient(to right,#7a7a7a 0,#7a7a7a 1px,transparent 1px,transparent 2px)"></div><svg style="position:absolute;left:40px;top:386px;" width="18" height="13" viewBox="0 0 18 13"><defs><pattern id="dith2" width="2" height="2" patternUnits="userSpaceOnUse"><rect width="2" height="2" fill="#ffff00"/><rect width="1" height="1" fill="#404000"/><rect x="1" y="1" width="1" height="1" fill="#404000"/></pattern></defs><path d="M1.5 11.5V2.5h3v-1h2v1h5v4" fill="url(#dith)" stroke="#000"/><path d="M1.5 11.5h10l5-5h-10z" fill="url(#dith2)" stroke="#000"/></svg><span style="left:61.5px;top:387px;font-size:11px;line-height:11px;letter-spacing:-0.095px;">Fuel Injector Sizing (12)</span><div style="left:45px;top:404px;width:9px;height:9px;border:1px solid #8f8f8f;background:linear-gradient(#fff,#e2e2e2);border-radius:1px"></div><div style="left:47px;top:408px;width:5px;height:1px;background:#34468f"></div><div style="left:49px;top:406px;width:1px;height:5px;background:#34468f"></div><div style="left:55px;top:408px;width:4px;height:1px;background:repeating-linear-gradient(to right,#7a7a7a 0,#7a7a7a 1px,transparent 1px,transparent 2px)"></div><svg style="position:absolute;left:59px;top:401px;" width="14" height="14" viewBox="0 0 14 14"><defs><pattern id="dith" width="2" height="2" patternUnits="userSpaceOnUse"><rect width="2" height="2" fill="#ffff00"/><rect width="1" height="1" fill="#ffffc0"/><rect x="1" y="1" width="1" height="1" fill="#ffffc0"/></pattern></defs><path d="M1.5 12.5V3.5h10v9z" fill="url(#dith)" stroke="#000"/><path d="M2.5 3.5V2.5h2v1" fill="#ffffc0" stroke="#000"/></svg><span style="left:80.5px;top:403px;font-size:11px;line-height:11px;letter-spacing:-0.089px;">Quick Injector Values (4)</span><div style="left:45px;top:420px;width:9px;height:9px;border:1px solid #8f8f8f;background:linear-gradient(#fff,#e2e2e2);border-radius:1px"></div><div style="left:47px;top:424px;width:5px;height:1px;background:#34468f"></div><div style="left:49px;top:422px;width:1px;height:5px;background:#34468f"></div><div style="left:55px;top:424px;width:4px;height:1px;background:repeating-linear-gradient(to right,#7a7a7a 0,#7a7a7a 1px,transparent 1px,transparent 2px)"></div><svg style="position:absolute;left:59px;top:417px;" width="14" height="14" viewBox="0 0 14 14"><defs><pattern id="dith" width="2" height="2" patternUnits="userSpaceOnUse"><rect width="2" height="2" fill="#ffff00"/><rect width="1" height="1" fill="#ffffc0"/><rect x="1" y="1" width="1" height="1" fill="#ffffc0"/></pattern></defs><path d="M1.5 12.5V3.5h10v9z" fill="url(#dith)" stroke="#000"/><path d="M2.5 3.5V2.5h2v1" fill="#ffffc0" stroke="#000"/></svg><span style="left:80.5px;top:419px;font-size:11px;line-height:11px;letter-spacing:-0.266px;">Scaled Values (3)</span><div style="left:51px;top:440px;width:9px;height:1px;background:repeating-linear-gradient(to right,#7a7a7a 0,#7a7a7a 1px,transparent 1px,transparent 2px)"></div><svg style="position:absolute;left:61px;top:434px;shape-rendering:crispEdges" width="14" height="13" viewBox="0 0 14 13"><g fill="#000" shape-rendering="crispEdges"><rect x="2" y="1" width="11" height="2"/><rect x="1" y="2" width="2" height="1"/><rect x="0" y="3" width="3" height="1"/><rect x="4" y="3" width="2" height="5"/><rect x="3" y="8" width="3" height="2"/><rect x="2" y="10" width="3" height="2"/><rect x="8" y="3" width="2" height="8"/><rect x="9" y="10" width="3" height="2"/><rect x="11" y="9" width="2" height="2"/></g></svg><span style="left:80.5px;top:435px;font-size:11px;line-height:11px;letter-spacing:-0.045px;">Fuel Injector Low Slope - ^ Actual Value</span><div style="left:51px;top:456px;width:9px;height:1px;background:repeating-linear-gradient(to right,#7a7a7a 0,#7a7a7a 1px,transparent 1px,transparent 2px)"></div><svg style="position:absolute;left:61px;top:450px;shape-rendering:crispEdges" width="14" height="13" viewBox="0 0 14 13"><g fill="#000" shape-rendering="crispEdges"><rect x="2" y="1" width="11" height="2"/><rect x="1" y="2" width="2" height="1"/><rect x="0" y="3" width="3" height="1"/><rect x="4" y="3" width="2" height="5"/><rect x="3" y="8" width="3" height="2"/><rect x="2" y="10" width="3" height="2"/><rect x="8" y="3" width="2" height="8"/><rect x="9" y="10" width="3" height="2"/><rect x="11" y="9" width="2" height="2"/></g></svg><span style="left:80.5px;top:451px;font-size:11px;line-height:11px;letter-spacing:-0.054px;">Fuel Injector Hi Slope - ^ Actual Value</span><div style="left:51px;top:472px;width:9px;height:1px;background:repeating-linear-gradient(to right,#7a7a7a 0,#7a7a7a 1px,transparent 1px,transparent 2px)"></div><svg style="position:absolute;left:61px;top:466px;shape-rendering:crispEdges" width="14" height="13" viewBox="0 0 14 13"><g fill="#000" shape-rendering="crispEdges"><rect x="2" y="1" width="11" height="2"/><rect x="1" y="2" width="2" height="1"/><rect x="0" y="3" width="3" height="1"/><rect x="4" y="3" width="2" height="5"/><rect x="3" y="8" width="3" height="2"/><rect x="2" y="10" width="3" height="2"/><rect x="8" y="3" width="2" height="8"/><rect x="9" y="10" width="3" height="2"/><rect x="11" y="9" width="2" height="2"/></g></svg><span style="left:80.5px;top:467px;font-size:11px;line-height:11px;">Fuel Injector Breakpoint - ^ Actual Value</span><div style="left:51px;top:488px;width:9px;height:1px;background:repeating-linear-gradient(to right,#7a7a7a 0,#7a7a7a 1px,transparent 1px,transparent 2px)"></div><svg style="position:absolute;left:61px;top:482px;shape-rendering:crispEdges" width="14" height="13" viewBox="0 0 14 13"><g fill="#000" shape-rendering="crispEdges"><rect x="2" y="1" width="11" height="2"/><rect x="1" y="2" width="2" height="1"/><rect x="0" y="3" width="3" height="1"/><rect x="4" y="3" width="2" height="5"/><rect x="3" y="8" width="3" height="2"/><rect x="2" y="10" width="3" height="2"/><rect x="8" y="3" width="2" height="8"/><rect x="9" y="10" width="3" height="2"/><rect x="11" y="9" width="2" height="2"/></g></svg><span style="left:80.5px;top:483px;font-size:11px;line-height:11px;letter-spacing:-0.036px;">Fuel Injector Breakpoint Variant</span><div style="left:51px;top:504px;width:9px;height:1px;background:repeating-linear-gradient(to right,#7a7a7a 0,#7a7a7a 1px,transparent 1px,transparent 2px)"></div><svg style="position:absolute;left:61px;top:498px;shape-rendering:crispEdges" width="14" height="13" viewBox="0 0 14 13"><g fill="#000" shape-rendering="crispEdges"><rect x="2" y="1" width="11" height="2"/><rect x="1" y="2" width="2" height="1"/><rect x="0" y="3" width="3" height="1"/><rect x="4" y="3" width="2" height="5"/><rect x="3" y="8" width="3" height="2"/><rect x="2" y="10" width="3" height="2"/><rect x="8" y="3" width="2" height="8"/><rect x="9" y="10" width="3" height="2"/><rect x="11" y="9" width="2" height="2"/></g></svg><span style="left:80.5px;top:499px;font-size:11px;line-height:11px;letter-spacing:-0.214px;">Minimum Fuel Injector Pulsewidth</span><div style="left:7px;top:516px;width:9px;height:9px;border:1px solid #8f8f8f;background:linear-gradient(#fff,#e2e2e2);border-radius:1px"></div><div style="left:9px;top:520px;width:5px;height:1px;background:#34468f"></div><div style="left:11px;top:518px;width:1px;height:5px;background:#34468f"></div><div style="left:17px;top:520px;width:4px;height:1px;background:repeating-linear-gradient(to right,#7a7a7a 0,#7a7a7a 1px,transparent 1px,transparent 2px)"></div><svg style="position:absolute;left:21px;top:513px;" width="14" height="14" viewBox="0 0 14 14"><defs><pattern id="dith" width="2" height="2" patternUnits="userSpaceOnUse"><rect width="2" height="2" fill="#ffff00"/><rect width="1" height="1" fill="#ffffc0"/><rect x="1" y="1" width="1" height="1" fill="#ffffc0"/></pattern></defs><path d="M1.5 12.5V3.5h10v9z" fill="url(#dith)" stroke="#000"/><path d="M2.5 3.5V2.5h2v1" fill="#ffffc0" stroke="#000"/></svg><span style="left:42.5px;top:515px;font-size:11px;line-height:11px;letter-spacing:-0.126px;">[ Transmission ] (171)</span><div style="left:7px;top:532px;width:9px;height:9px;border:1px solid #8f8f8f;background:linear-gradient(#fff,#e2e2e2);border-radius:1px"></div><div style="left:9px;top:536px;width:5px;height:1px;background:#34468f"></div><div style="left:11px;top:534px;width:1px;height:5px;background:#34468f"></div><div style="left:17px;top:536px;width:4px;height:1px;background:repeating-linear-gradient(to right,#7a7a7a 0,#7a7a7a 1px,transparent 1px,transparent 2px)"></div><svg style="position:absolute;left:21px;top:529px;" width="14" height="14" viewBox="0 0 14 14"><defs><pattern id="dith" width="2" height="2" patternUnits="userSpaceOnUse"><rect width="2" height="2" fill="#ffff00"/><rect width="1" height="1" fill="#ffffc0"/><rect x="1" y="1" width="1" height="1" fill="#ffffc0"/></pattern></defs><path d="M1.5 12.5V3.5h10v9z" fill="url(#dith)" stroke="#000"/><path d="M2.5 3.5V2.5h2v1" fill="#ffffc0" stroke="#000"/></svg><span style="left:42.5px;top:531px;font-size:11px;line-height:11px;letter-spacing:-0.243px;">[ EGR System ] (10)</span><div style="left:7px;top:548px;width:9px;height:9px;border:1px solid #8f8f8f;background:linear-gradient(#fff,#e2e2e2);border-radius:1px"></div><div style="left:9px;top:552px;width:5px;height:1px;background:#34468f"></div><div style="left:11px;top:550px;width:1px;height:5px;background:#34468f"></div><div style="left:17px;top:552px;width:4px;height:1px;background:repeating-linear-gradient(to right,#7a7a7a 0,#7a7a7a 1px,transparent 1px,transparent 2px)"></div><svg style="position:absolute;left:21px;top:545px;" width="14" height="14" viewBox="0 0 14 14"><defs><pattern id="dith" width="2" height="2" patternUnits="userSpaceOnUse"><rect width="2" height="2" fill="#ffff00"/><rect width="1" height="1" fill="#ffffc0"/><rect x="1" y="1" width="1" height="1" fill="#ffffc0"/></pattern></defs><path d="M1.5 12.5V3.5h10v9z" fill="url(#dith)" stroke="#000"/><path d="M2.5 3.5V2.5h2v1" fill="#ffffc0" stroke="#000"/></svg><span style="left:42.5px;top:547px;font-size:11px;line-height:11px;letter-spacing:-0.127px;">[ Rev-Speed Limiters ] (19)</span><div style="left:7px;top:564px;width:9px;height:9px;border:1px solid #8f8f8f;background:linear-gradient(#fff,#e2e2e2);border-radius:1px"></div><div style="left:9px;top:568px;width:5px;height:1px;background:#34468f"></div><div style="left:11px;top:566px;width:1px;height:5px;background:#34468f"></div><div style="left:17px;top:568px;width:4px;height:1px;background:repeating-linear-gradient(to right,#7a7a7a 0,#7a7a7a 1px,transparent 1px,transparent 2px)"></div><svg style="position:absolute;left:21px;top:561px;" width="14" height="14" viewBox="0 0 14 14"><defs><pattern id="dith" width="2" height="2" patternUnits="userSpaceOnUse"><rect width="2" height="2" fill="#ffff00"/><rect width="1" height="1" fill="#ffffc0"/><rect x="1" y="1" width="1" height="1" fill="#ffffc0"/></pattern></defs><path d="M1.5 12.5V3.5h10v9z" fill="url(#dith)" stroke="#000"/><path d="M2.5 3.5V2.5h2v1" fill="#ffffc0" stroke="#000"/></svg><span style="left:42.5px;top:563px;font-size:11px;line-height:11px;letter-spacing:-0.015px;">[ Ignition Model ] (65)</span><div style="left:7px;top:580px;width:9px;height:9px;border:1px solid #8f8f8f;background:linear-gradient(#fff,#e2e2e2);border-radius:1px"></div><div style="left:9px;top:584px;width:5px;height:1px;background:#34468f"></div><div style="left:11px;top:582px;width:1px;height:5px;background:#34468f"></div><div style="left:17px;top:584px;width:4px;height:1px;background:repeating-linear-gradient(to right,#7a7a7a 0,#7a7a7a 1px,transparent 1px,transparent 2px)"></div><svg style="position:absolute;left:21px;top:577px;" width="14" height="14" viewBox="0 0 14 14"><defs><pattern id="dith" width="2" height="2" patternUnits="userSpaceOnUse"><rect width="2" height="2" fill="#ffff00"/><rect width="1" height="1" fill="#ffffc0"/><rect x="1" y="1" width="1" height="1" fill="#ffffc0"/></pattern></defs><path d="M1.5 12.5V3.5h10v9z" fill="url(#dith)" stroke="#000"/><path d="M2.5 3.5V2.5h2v1" fill="#ffffc0" stroke="#000"/></svg><span style="left:42.5px;top:579px;font-size:11px;line-height:11px;letter-spacing:-0.054px;">[ IMRC ] (7)</span><div style="left:7px;top:596px;width:9px;height:9px;border:1px solid #8f8f8f;background:linear-gradient(#fff,#e2e2e2);border-radius:1px"></div><div style="left:9px;top:600px;width:5px;height:1px;background:#34468f"></div><div style="left:11px;top:598px;width:1px;height:5px;background:#34468f"></div><div style="left:17px;top:600px;width:4px;height:1px;background:repeating-linear-gradient(to right,#7a7a7a 0,#7a7a7a 1px,transparent 1px,transparent 2px)"></div><svg style="position:absolute;left:21px;top:593px;" width="14" height="14" viewBox="0 0 14 14"><defs><pattern id="dith" width="2" height="2" patternUnits="userSpaceOnUse"><rect width="2" height="2" fill="#ffff00"/><rect width="1" height="1" fill="#ffffc0"/><rect x="1" y="1" width="1" height="1" fill="#ffffc0"/></pattern></defs><path d="M1.5 12.5V3.5h10v9z" fill="url(#dith)" stroke="#000"/><path d="M2.5 3.5V2.5h2v1" fill="#ffffc0" stroke="#000"/></svg><span style="left:42.5px;top:595px;font-size:11px;line-height:11px;letter-spacing:0.081px;">[ Adaptives ] (21)</span><div style="left:7px;top:612px;width:9px;height:9px;border:1px solid #8f8f8f;background:linear-gradient(#fff,#e2e2e2);border-radius:1px"></div><div style="left:9px;top:616px;width:5px;height:1px;background:#34468f"></div><div style="left:11px;top:614px;width:1px;height:5px;background:#34468f"></div><div style="left:17px;top:616px;width:4px;height:1px;background:repeating-linear-gradient(to right,#7a7a7a 0,#7a7a7a 1px,transparent 1px,transparent 2px)"></div><svg style="position:absolute;left:21px;top:609px;" width="14" height="14" viewBox="0 0 14 14"><defs><pattern id="dith" width="2" height="2" patternUnits="userSpaceOnUse"><rect width="2" height="2" fill="#ffff00"/><rect width="1" height="1" fill="#ffffc0"/><rect x="1" y="1" width="1" height="1" fill="#ffffc0"/></pattern></defs><path d="M1.5 12.5V3.5h10v9z" fill="url(#dith)" stroke="#000"/><path d="M2.5 3.5V2.5h2v1" fill="#ffffc0" stroke="#000"/></svg><span style="left:42.5px;top:611px;font-size:11px;line-height:11px;letter-spacing:-0.049px;">[ Startup-Cold Fuel ] (10)</span><div style="left:7px;top:628px;width:9px;height:9px;border:1px solid #8f8f8f;background:linear-gradient(#fff,#e2e2e2);border-radius:1px"></div><div style="left:9px;top:632px;width:5px;height:1px;background:#34468f"></div><div style="left:11px;top:630px;width:1px;height:5px;background:#34468f"></div><div style="left:17px;top:632px;width:4px;height:1px;background:repeating-linear-gradient(to right,#7a7a7a 0,#7a7a7a 1px,transparent 1px,transparent 2px)"></div><svg style="position:absolute;left:21px;top:625px;" width="14" height="14" viewBox="0 0 14 14"><defs><pattern id="dith" width="2" height="2" patternUnits="userSpaceOnUse"><rect width="2" height="2" fill="#ffff00"/><rect width="1" height="1" fill="#ffffc0"/><rect x="1" y="1" width="1" height="1" fill="#ffffc0"/></pattern></defs><path d="M1.5 12.5V3.5h10v9z" fill="url(#dith)" stroke="#000"/><path d="M2.5 3.5V2.5h2v1" fill="#ffffc0" stroke="#000"/></svg><span style="left:42.5px;top:627px;font-size:11px;line-height:11px;letter-spacing:-0.102px;">[ Crank Fuel ] (8)</span><div style="left:7px;top:644px;width:9px;height:9px;border:1px solid #8f8f8f;background:linear-gradient(#fff,#e2e2e2);border-radius:1px"></div><div style="left:9px;top:648px;width:5px;height:1px;background:#34468f"></div><div style="left:11px;top:646px;width:1px;height:5px;background:#34468f"></div><div style="left:17px;top:648px;width:4px;height:1px;background:repeating-linear-gradient(to right,#7a7a7a 0,#7a7a7a 1px,transparent 1px,transparent 2px)"></div><svg style="position:absolute;left:21px;top:641px;" width="14" height="14" viewBox="0 0 14 14"><defs><pattern id="dith" width="2" height="2" patternUnits="userSpaceOnUse"><rect width="2" height="2" fill="#ffff00"/><rect width="1" height="1" fill="#ffffc0"/><rect x="1" y="1" width="1" height="1" fill="#ffffc0"/></pattern></defs><path d="M1.5 12.5V3.5h10v9z" fill="url(#dith)" stroke="#000"/><path d="M2.5 3.5V2.5h2v1" fill="#ffffc0" stroke="#000"/></svg><span style="left:42.5px;top:643px;font-size:11px;line-height:11px;letter-spacing:-0.125px;">[ Variable Speed Fan ] (6)</span><div style="left:7px;top:660px;width:9px;height:9px;border:1px solid #8f8f8f;background:linear-gradient(#fff,#e2e2e2);border-radius:1px"></div><div style="left:9px;top:664px;width:5px;height:1px;background:#34468f"></div><div style="left:11px;top:662px;width:1px;height:5px;background:#34468f"></div><div style="left:17px;top:664px;width:4px;height:1px;background:repeating-linear-gradient(to right,#7a7a7a 0,#7a7a7a 1px,transparent 1px,transparent 2px)"></div><svg style="position:absolute;left:21px;top:657px;" width="14" height="14" viewBox="0 0 14 14"><defs><pattern id="dith" width="2" height="2" patternUnits="userSpaceOnUse"><rect width="2" height="2" fill="#ffff00"/><rect width="1" height="1" fill="#ffffc0"/><rect x="1" y="1" width="1" height="1" fill="#ffffc0"/></pattern></defs><path d="M1.5 12.5V3.5h10v9z" fill="url(#dith)" stroke="#000"/><path d="M2.5 3.5V2.5h2v1" fill="#ffffc0" stroke="#000"/></svg><span style="left:42.5px;top:659px;font-size:11px;line-height:11px;letter-spacing:-0.054px;">[ OBD-II System ] (13)</span><div style="left:7px;top:676px;width:9px;height:9px;border:1px solid #8f8f8f;background:linear-gradient(#fff,#e2e2e2);border-radius:1px"></div><div style="left:9px;top:680px;width:5px;height:1px;background:#34468f"></div><div style="left:11px;top:678px;width:1px;height:5px;background:#34468f"></div><div style="left:17px;top:680px;width:4px;height:1px;background:repeating-linear-gradient(to right,#7a7a7a 0,#7a7a7a 1px,transparent 1px,transparent 2px)"></div><svg style="position:absolute;left:21px;top:673px;" width="14" height="14" viewBox="0 0 14 14"><defs><pattern id="dith" width="2" height="2" patternUnits="userSpaceOnUse"><rect width="2" height="2" fill="#ffff00"/><rect width="1" height="1" fill="#ffffc0"/><rect x="1" y="1" width="1" height="1" fill="#ffffc0"/></pattern></defs><path d="M1.5 12.5V3.5h10v9z" fill="url(#dith)" stroke="#000"/><path d="M2.5 3.5V2.5h2v1" fill="#ffffc0" stroke="#000"/></svg><span style="left:42.5px;top:675px;font-size:11px;line-height:11px;letter-spacing:-0.101px;">[ Rear O2 Sensor ] (4)</span><div style="left:7px;top:692px;width:9px;height:9px;border:1px solid #8f8f8f;background:linear-gradient(#fff,#e2e2e2);border-radius:1px"></div><div style="left:9px;top:696px;width:5px;height:1px;background:#34468f"></div><div style="left:11px;top:694px;width:1px;height:5px;background:#34468f"></div><div style="left:17px;top:696px;width:4px;height:1px;background:repeating-linear-gradient(to right,#7a7a7a 0,#7a7a7a 1px,transparent 1px,transparent 2px)"></div><svg style="position:absolute;left:21px;top:689px;" width="14" height="14" viewBox="0 0 14 14"><defs><pattern id="dith" width="2" height="2" patternUnits="userSpaceOnUse"><rect width="2" height="2" fill="#ffff00"/><rect width="1" height="1" fill="#ffffc0"/><rect x="1" y="1" width="1" height="1" fill="#ffffc0"/></pattern></defs><path d="M1.5 12.5V3.5h10v9z" fill="url(#dith)" stroke="#000"/><path d="M2.5 3.5V2.5h2v1" fill="#ffffc0" stroke="#000"/></svg><span style="left:42.5px;top:691px;font-size:11px;line-height:11px;letter-spacing:-0.036px;">[ Idle Speed Control ] (50)</span><div style="left:7px;top:708px;width:9px;height:9px;border:1px solid #8f8f8f;background:linear-gradient(#fff,#e2e2e2);border-radius:1px"></div><div style="left:9px;top:712px;width:5px;height:1px;background:#34468f"></div><div style="left:11px;top:710px;width:1px;height:5px;background:#34468f"></div><div style="left:17px;top:712px;width:4px;height:1px;background:repeating-linear-gradient(to right,#7a7a7a 0,#7a7a7a 1px,transparent 1px,transparent 2px)"></div><svg style="position:absolute;left:21px;top:705px;" width="14" height="14" viewBox="0 0 14 14"><defs><pattern id="dith" width="2" height="2" patternUnits="userSpaceOnUse"><rect width="2" height="2" fill="#ffff00"/><rect width="1" height="1" fill="#ffffc0"/><rect x="1" y="1" width="1" height="1" fill="#ffffc0"/></pattern></defs><path d="M1.5 12.5V3.5h10v9z" fill="url(#dith)" stroke="#000"/><path d="M2.5 3.5V2.5h2v1" fill="#ffffc0" stroke="#000"/></svg><span style="left:42.5px;top:707px;font-size:11px;line-height:11px;">[ Speed Shift Items ] (22)</span></div><div style="left:548px;top:220px;width:16px;height:708px;background:#f0f0f0"></div><div style="left:549px;top:410px;width:14px;height:380px;background:#cdcdcd"></div><svg style="position:absolute;left:550.5px;top:223.5px;" width="11.0" height="11.0" viewBox="0 0 11.0 11.0"><polyline points="2,7.25 5.5,3.75 9.0,7.25" fill="none" stroke="#606060" stroke-width="2"/></svg><svg style="position:absolute;left:550.5px;top:913.5px;" width="11.0" height="11.0" viewBox="0 0 11.0 11.0"><polyline points="2,3.75 5.5,7.25 9.0,3.75" fill="none" stroke="#606060" stroke-width="2"/></svg><div style="left:572px;top:168px;width:1171px;height:582px;background:#808080"></div><div style="left:572px;top:168px;width:1171px;height:582px;overflow:hidden"><div style="left:0px;top:1px;width:211px;height:166px;background:#b9d1ea;border:1px solid #1a1a1a;border-radius:6px 6px 0 0;overflow:hidden"><div style="left:0;top:0;width:209px;height:30px;background:linear-gradient(#9ab4d2,#b8d0ea);box-shadow:inset 1px 1px 0 #c8dcf0"></div><div style="left:208px;top:0;width:1px;height:166px;background:#3cc8f0"></div><div style="left:0;top:163px;width:210px;height:1px;background:#3cc8f0"></div></div><svg style="position:absolute;left:9px;top:13px;" width="18" height="12" viewBox="0 0 18 12"><rect x="1" y="2" width="16" height="8" rx="0.5" fill="#000"/><rect x="2.3" y="0" width="1.6" height="2.2" fill="#000"/><rect x="2.3" y="9.8" width="1.6" height="2.2" fill="#000"/><rect x="5.5" y="0" width="1.6" height="2.2" fill="#000"/><rect x="5.5" y="9.8" width="1.6" height="2.2" fill="#000"/><rect x="8.7" y="0" width="1.6" height="2.2" fill="#000"/><rect x="8.7" y="9.8" width="1.6" height="2.2" fill="#000"/><rect x="11.9" y="0" width="1.6" height="2.2" fill="#000"/><rect x="11.9" y="9.8" width="1.6" height="2.2" fill="#000"/><rect x="15.1" y="0" width="1.6" height="2.2" fill="#000"/><rect x="15.1" y="9.8" width="1.6" height="2.2" fill="#000"/></svg><span style="left:26px;top:12px;font-size:15px;line-height:15px;width:143px;text-align:center;">Hardware Multipli...</span><div style="left:169px;top:10px;width:32px;height:18px;border:1px solid #3c1a1a;border-radius:3px;background:linear-gradient(#eaa898 0,#e09080 45%,#c0482a 50%,#c85a3a 80%,#d88a70 100%)"></div><svg style="position:absolute;left:179px;top:13px;" width="12" height="11" viewBox="0 0 12 11"><path d="M2.5 2.5l7 6M9.5 2.5l-7 6" stroke="#3a3a4a" stroke-width="4.4" stroke-linecap="round"/><path d="M2.5 2.5l7 6M9.5 2.5l-7 6" stroke="#fff" stroke-width="2.6" stroke-linecap="round"/></svg><div style="left:8px;top:31px;width:195px;height:128px;background:#f0f0f0"></div><div style="left:14px;top:38px;width:185px;height:32px;border-top:1px solid #a0a0a0;border-left:1px solid #a0a0a0;border-bottom:1px solid #fff;border-right:1px solid #fff"></div><span style="left:14px;top:41px;font-size:11px;line-height:11px;letter-spacing:-0.066px;width:185px;text-align:center;">Hardware Multiplier Verification -- [Do</span><span style="left:14px;top:54px;font-size:11px;line-height:11px;letter-spacing:-0.115px;width:185px;text-align:center;">Not Save or Edit]</span><div style="left:25px;top:80px;width:160px;height:4px;background:#e7eaea;border:1px solid #d6d6d6;border-radius:1px"></div><div style="left:179px;top:77px;width:4px;height:9px;background:#f0f0f0;border:1px solid #959595;border-bottom:none"></div><div style="left:13px;top:98px;width:71px;height:20px;background:#fff;border:1px solid #ababab"></div><span style="left:19px;top:103px;font-size:11px;line-height:11px;">0.9999</span><span style="left:90.5px;top:106px;font-size:11px;line-height:11px;letter-spacing:-0.152px;">Variant xMul</span><span style="left:13px;top:122px;font-size:11px;line-height:11px;letter-spacing:-0.183px;">V2_NEW_pt40_scaled-...</span><div style="left:150px;top:118px;width:48px;height:16px;border:1px solid #3399ff;border-radius:1px;background:linear-gradient(#f6f6f6 0,#ededed 50%,#e2e2e2 51%,#d9d9d9 100%)"></div><span style="left:150px;top:121.5px;font-size:11px;line-height:11px;width:48px;text-align:center;">Save</span><div style="left:13px;top:135px;width:71px;height:20px;background:#f0f0f0;border:1px solid #ababab"></div><span style="left:19px;top:140px;font-size:11px;line-height:11px;">0.4049</span><div style="left:87px;top:138px;width:36px;height:16px;border:1px solid #acacac;border-radius:1px;background:linear-gradient(#f6f6f6 0,#ededed 50%,#e2e2e2 51%,#d9d9d9 100%)"></div><span style="left:87px;top:141.5px;font-size:11px;line-height:11px;letter-spacing:-0.122px;width:36px;text-align:center;">Copy</span><div style="left:150px;top:138px;width:48px;height:16px;border:1px solid #acacac;border-radius:1px;background:linear-gradient(#f6f6f6 0,#ededed 50%,#e2e2e2 51%,#d9d9d9 100%)"></div><span style="left:150px;top:141.5px;font-size:11px;line-height:11px;letter-spacing:-0.342px;width:48px;text-align:center;">Cancel</span><div style="left:218px;top:2px;width:211px;height:166px;background:#d7e4f2;border:1px solid #4a4a4a;border-radius:6px 6px 0 0;overflow:hidden;box-shadow:inset 1px 1px 0 #f4f8fc"><div style="left:1px;top:1px;width:208px;height:29px;background:linear-gradient(#bdcbdb,#d6e3f1)"></div></div><svg style="position:absolute;left:227px;top:14px;" width="18" height="12" viewBox="0 0 18 12"><rect x="1" y="2" width="16" height="8" rx="0.5" fill="#000"/><rect x="2.3" y="0" width="1.6" height="2.2" fill="#000"/><rect x="2.3" y="9.8" width="1.6" height="2.2" fill="#000"/><rect x="5.5" y="0" width="1.6" height="2.2" fill="#000"/><rect x="5.5" y="9.8" width="1.6" height="2.2" fill="#000"/><rect x="8.7" y="0" width="1.6" height="2.2" fill="#000"/><rect x="8.7" y="9.8" width="1.6" height="2.2" fill="#000"/><rect x="11.9" y="0" width="1.6" height="2.2" fill="#000"/><rect x="11.9" y="9.8" width="1.6" height="2.2" fill="#000"/><rect x="15.1" y="0" width="1.6" height="2.2" fill="#000"/><rect x="15.1" y="9.8" width="1.6" height="2.2" fill="#000"/></svg><span style="left:244px;top:13px;font-size:15px;line-height:15px;letter-spacing:-0.080px;width:143px;text-align:center;">Scaling Multiplier ...</span><div style="left:387px;top:11px;width:32px;height:18px;border:1px solid #7b8aa8;border-radius:3px;background:linear-gradient(#c4d2e2,#d2dfee)"></div><svg style="position:absolute;left:397px;top:14px;" width="12" height="11" viewBox="0 0 12 11"><path d="M2.5 2.5l7 6M9.5 2.5l-7 6" stroke="#3a4252" stroke-width="4.4" stroke-linecap="round"/><path d="M2.5 2.5l7 6M9.5 2.5l-7 6" stroke="#f4f4f4" stroke-width="2.6" stroke-linecap="round"/></svg><div style="left:226px;top:32px;width:195px;height:128px;background:#f0f0f0"></div><div style="left:232px;top:39px;width:185px;height:32px;border-top:1px solid #a0a0a0;border-left:1px solid #a0a0a0;border-bottom:1px solid #fff;border-right:1px solid #fff"></div><span style="left:232px;top:42px;font-size:11px;line-height:11px;letter-spacing:-0.187px;width:185px;text-align:center;">Scaling Multiplier Value to Use -- [Do</span><span style="left:232px;top:55px;font-size:11px;line-height:11px;letter-spacing:-0.115px;width:185px;text-align:center;">Not Save or Edit]</span><div style="left:243px;top:81px;width:160px;height:4px;background:#e7eaea;border:1px solid #d6d6d6;border-radius:1px"></div><div style="left:284px;top:78px;width:4px;height:9px;background:#f0f0f0;border:1px solid #959595;border-bottom:none"></div><div style="left:231px;top:99px;width:71px;height:20px;background:#fff;border:1px solid #ababab"></div><span style="left:237px;top:104px;font-size:11px;line-height:11px;">1.0000</span><span style="left:308.5px;top:107px;font-size:11px;line-height:11px;letter-spacing:-0.342px;">Scaling Multiplier</span><span style="left:231px;top:123px;font-size:11px;line-height:11px;letter-spacing:-0.183px;">V2_NEW_pt40_scaled-...</span><div style="left:368px;top:119px;width:48px;height:16px;border:1px solid #3399ff;border-radius:1px;background:linear-gradient(#f6f6f6 0,#ededed 50%,#e2e2e2 51%,#d9d9d9 100%)"></div><span style="left:368px;top:122.5px;font-size:11px;line-height:11px;width:48px;text-align:center;">Save</span><div style="left:231px;top:136px;width:71px;height:20px;background:#f0f0f0;border:1px solid #ababab"></div><span style="left:237px;top:141px;font-size:11px;line-height:11px;">0.4049</span><div style="left:305px;top:139px;width:36px;height:16px;border:1px solid #acacac;border-radius:1px;background:linear-gradient(#f6f6f6 0,#ededed 50%,#e2e2e2 51%,#d9d9d9 100%)"></div><span style="left:305px;top:142.5px;font-size:11px;line-height:11px;letter-spacing:-0.122px;width:36px;text-align:center;">Copy</span><div style="left:368px;top:139px;width:48px;height:16px;border:1px solid #acacac;border-radius:1px;background:linear-gradient(#f6f6f6 0,#ededed 50%,#e2e2e2 51%,#d9d9d9 100%)"></div><span style="left:368px;top:142.5px;font-size:11px;line-height:11px;letter-spacing:-0.342px;width:48px;text-align:center;">Cancel</span><div style="left:8px;top:181px;width:211px;height:166px;background:#d7e4f2;border:1px solid #4a4a4a;border-radius:6px 6px 0 0;overflow:hidden;box-shadow:inset 1px 1px 0 #f4f8fc"><div style="left:1px;top:1px;width:208px;height:29px;background:linear-gradient(#bdcbdb,#d6e3f1)"></div></div><svg style="position:absolute;left:17px;top:193px;" width="18" height="12" viewBox="0 0 18 12"><rect x="1" y="2" width="16" height="8" rx="0.5" fill="#000"/><rect x="2.3" y="0" width="1.6" height="2.2" fill="#000"/><rect x="2.3" y="9.8" width="1.6" height="2.2" fill="#000"/><rect x="5.5" y="0" width="1.6" height="2.2" fill="#000"/><rect x="5.5" y="9.8" width="1.6" height="2.2" fill="#000"/><rect x="8.7" y="0" width="1.6" height="2.2" fill="#000"/><rect x="8.7" y="9.8" width="1.6" height="2.2" fill="#000"/><rect x="11.9" y="0" width="1.6" height="2.2" fill="#000"/><rect x="11.9" y="9.8" width="1.6" height="2.2" fill="#000"/><rect x="15.1" y="0" width="1.6" height="2.2" fill="#000"/><rect x="15.1" y="9.8" width="1.6" height="2.2" fill="#000"/></svg><span style="left:34px;top:192px;font-size:15px;line-height:15px;letter-spacing:-0.270px;width:143px;text-align:center;">Fuel Injector Hi Slo...</span><div style="left:177px;top:190px;width:32px;height:18px;border:1px solid #7b8aa8;border-radius:3px;background:linear-gradient(#c4d2e2,#d2dfee)"></div><svg style="position:absolute;left:187px;top:193px;" width="12" height="11" viewBox="0 0 12 11"><path d="M2.5 2.5l7 6M9.5 2.5l-7 6" stroke="#3a4252" stroke-width="4.4" stroke-linecap="round"/><path d="M2.5 2.5l7 6M9.5 2.5l-7 6" stroke="#f4f4f4" stroke-width="2.6" stroke-linecap="round"/></svg><div style="left:16px;top:211px;width:195px;height:128px;background:#f0f0f0"></div><div style="left:22px;top:218px;width:185px;height:32px;border-top:1px solid #a0a0a0;border-left:1px solid #a0a0a0;border-bottom:1px solid #fff;border-right:1px solid #fff"></div><span style="left:22px;top:221px;font-size:11px;line-height:11px;letter-spacing:-0.041px;width:185px;text-align:center;">Fuel Injector Hi Slope - ^ Actual Value</span><div style="left:33px;top:260px;width:160px;height:4px;background:#e7eaea;border:1px solid #d6d6d6;border-radius:1px"></div><div style="left:115px;top:257px;width:4px;height:9px;background:#f0f0f0;border:1px solid #959595;border-bottom:none"></div><div style="left:21px;top:278px;width:71px;height:20px;background:#fff;border:1px solid #ababab"></div><span style="left:27px;top:283px;font-size:11px;line-height:11px;">59.7345</span><span style="left:98.5px;top:286px;font-size:11px;line-height:11px;letter-spacing:-0.858px;">LBS/HR</span><span style="left:21px;top:302px;font-size:11px;line-height:11px;letter-spacing:-0.183px;">V2_NEW_pt40_scaled-...</span><div style="left:158px;top:298px;width:48px;height:16px;border:1px solid #3399ff;border-radius:1px;background:linear-gradient(#f6f6f6 0,#ededed 50%,#e2e2e2 51%,#d9d9d9 100%)"></div><span style="left:158px;top:301.5px;font-size:11px;line-height:11px;width:48px;text-align:center;">Save</span><div style="left:21px;top:315px;width:71px;height:20px;background:#f0f0f0;border:1px solid #ababab"></div><span style="left:27px;top:320px;font-size:11px;line-height:11px;">24.1920</span><div style="left:95px;top:318px;width:36px;height:16px;border:1px solid #acacac;border-radius:1px;background:linear-gradient(#f6f6f6 0,#ededed 50%,#e2e2e2 51%,#d9d9d9 100%)"></div><span style="left:95px;top:321.5px;font-size:11px;line-height:11px;letter-spacing:-0.122px;width:36px;text-align:center;">Copy</span><div style="left:158px;top:318px;width:48px;height:16px;border:1px solid #acacac;border-radius:1px;background:linear-gradient(#f6f6f6 0,#ededed 50%,#e2e2e2 51%,#d9d9d9 100%)"></div><span style="left:158px;top:321.5px;font-size:11px;line-height:11px;letter-spacing:-0.342px;width:48px;text-align:center;">Cancel</span><div style="left:226px;top:183px;width:211px;height:166px;background:#d7e4f2;border:1px solid #4a4a4a;border-radius:6px 6px 0 0;overflow:hidden;box-shadow:inset 1px 1px 0 #f4f8fc"><div style="left:1px;top:1px;width:208px;height:29px;background:linear-gradient(#bdcbdb,#d6e3f1)"></div></div><svg style="position:absolute;left:235px;top:195px;" width="18" height="12" viewBox="0 0 18 12"><rect x="1" y="2" width="16" height="8" rx="0.5" fill="#000"/><rect x="2.3" y="0" width="1.6" height="2.2" fill="#000"/><rect x="2.3" y="9.8" width="1.6" height="2.2" fill="#000"/><rect x="5.5" y="0" width="1.6" height="2.2" fill="#000"/><rect x="5.5" y="9.8" width="1.6" height="2.2" fill="#000"/><rect x="8.7" y="0" width="1.6" height="2.2" fill="#000"/><rect x="8.7" y="9.8" width="1.6" height="2.2" fill="#000"/><rect x="11.9" y="0" width="1.6" height="2.2" fill="#000"/><rect x="11.9" y="9.8" width="1.6" height="2.2" fill="#000"/><rect x="15.1" y="0" width="1.6" height="2.2" fill="#000"/><rect x="15.1" y="9.8" width="1.6" height="2.2" fill="#000"/></svg><span style="left:252px;top:194px;font-size:15px;line-height:15px;letter-spacing:-0.391px;width:143px;text-align:center;">Fuel Injector Low S...</span><div style="left:395px;top:192px;width:32px;height:18px;border:1px solid #7b8aa8;border-radius:3px;background:linear-gradient(#c4d2e2,#d2dfee)"></div><svg style="position:absolute;left:405px;top:195px;" width="12" height="11" viewBox="0 0 12 11"><path d="M2.5 2.5l7 6M9.5 2.5l-7 6" stroke="#3a4252" stroke-width="4.4" stroke-linecap="round"/><path d="M2.5 2.5l7 6M9.5 2.5l-7 6" stroke="#f4f4f4" stroke-width="2.6" stroke-linecap="round"/></svg><div style="left:234px;top:213px;width:195px;height:128px;background:#f0f0f0"></div><div style="left:240px;top:220px;width:185px;height:32px;border-top:1px solid #a0a0a0;border-left:1px solid #a0a0a0;border-bottom:1px solid #fff;border-right:1px solid #fff"></div><span style="left:240px;top:223px;font-size:11px;line-height:11px;width:185px;text-align:center;">Fuel Injector Low Slope - ^ Actual</span><span style="left:240px;top:236px;font-size:11px;line-height:11px;letter-spacing:-0.386px;width:185px;text-align:center;">Value</span><div style="left:251px;top:262px;width:160px;height:4px;background:#e7eaea;border:1px solid #d6d6d6;border-radius:1px"></div><div style="left:340px;top:259px;width:4px;height:9px;background:#f0f0f0;border:1px solid #959595;border-bottom:none"></div><div style="left:239px;top:280px;width:71px;height:20px;background:#fff;border:1px solid #ababab"></div><span style="left:245px;top:285px;font-size:11px;line-height:11px;">64.3198</span><span style="left:316.5px;top:288px;font-size:11px;line-height:11px;letter-spacing:-0.858px;">LBS/HR</span><span style="left:239px;top:304px;font-size:11px;line-height:11px;letter-spacing:-0.183px;">V2_NEW_pt40_scaled-...</span><div style="left:376px;top:300px;width:48px;height:16px;border:1px solid #3399ff;border-radius:1px;background:linear-gradient(#f6f6f6 0,#ededed 50%,#e2e2e2 51%,#d9d9d9 100%)"></div><span style="left:376px;top:303.5px;font-size:11px;line-height:11px;width:48px;text-align:center;">Save</span><div style="left:239px;top:317px;width:71px;height:20px;background:#f0f0f0;border:1px solid #ababab"></div><span style="left:245px;top:322px;font-size:11px;line-height:11px;">25.2720</span><div style="left:313px;top:320px;width:36px;height:16px;border:1px solid #acacac;border-radius:1px;background:linear-gradient(#f6f6f6 0,#ededed 50%,#e2e2e2 51%,#d9d9d9 100%)"></div><span style="left:313px;top:323.5px;font-size:11px;line-height:11px;letter-spacing:-0.122px;width:36px;text-align:center;">Copy</span><div style="left:376px;top:320px;width:48px;height:16px;border:1px solid #acacac;border-radius:1px;background:linear-gradient(#f6f6f6 0,#ededed 50%,#e2e2e2 51%,#d9d9d9 100%)"></div><span style="left:376px;top:323.5px;font-size:11px;line-height:11px;letter-spacing:-0.342px;width:48px;text-align:center;">Cancel</span><div style="left:5px;top:360px;width:211px;height:166px;background:#d7e4f2;border:1px solid #4a4a4a;border-radius:6px 6px 0 0;overflow:hidden;box-shadow:inset 1px 1px 0 #f4f8fc"><div style="left:1px;top:1px;width:208px;height:29px;background:linear-gradient(#bdcbdb,#d6e3f1)"></div></div><svg style="position:absolute;left:14px;top:372px;" width="18" height="12" viewBox="0 0 18 12"><rect x="1" y="2" width="16" height="8" rx="0.5" fill="#000"/><rect x="2.3" y="0" width="1.6" height="2.2" fill="#000"/><rect x="2.3" y="9.8" width="1.6" height="2.2" fill="#000"/><rect x="5.5" y="0" width="1.6" height="2.2" fill="#000"/><rect x="5.5" y="9.8" width="1.6" height="2.2" fill="#000"/><rect x="8.7" y="0" width="1.6" height="2.2" fill="#000"/><rect x="8.7" y="9.8" width="1.6" height="2.2" fill="#000"/><rect x="11.9" y="0" width="1.6" height="2.2" fill="#000"/><rect x="11.9" y="9.8" width="1.6" height="2.2" fill="#000"/><rect x="15.1" y="0" width="1.6" height="2.2" fill="#000"/><rect x="15.1" y="9.8" width="1.6" height="2.2" fill="#000"/></svg><span style="left:31px;top:371px;font-size:15px;line-height:15px;letter-spacing:-0.355px;width:143px;text-align:center;">Fuel Injector Break...</span><div style="left:174px;top:369px;width:32px;height:18px;border:1px solid #7b8aa8;border-radius:3px;background:linear-gradient(#c4d2e2,#d2dfee)"></div><svg style="position:absolute;left:184px;top:372px;" width="12" height="11" viewBox="0 0 12 11"><path d="M2.5 2.5l7 6M9.5 2.5l-7 6" stroke="#3a4252" stroke-width="4.4" stroke-linecap="round"/><path d="M2.5 2.5l7 6M9.5 2.5l-7 6" stroke="#f4f4f4" stroke-width="2.6" stroke-linecap="round"/></svg><div style="left:13px;top:390px;width:195px;height:128px;background:#f0f0f0"></div><div style="left:19px;top:397px;width:185px;height:32px;border-top:1px solid #a0a0a0;border-left:1px solid #a0a0a0;border-bottom:1px solid #fff;border-right:1px solid #fff"></div><span style="left:19px;top:400px;font-size:11px;line-height:11px;letter-spacing:0.059px;width:185px;text-align:center;">Fuel Injector Breakpoint - ^ Actual</span><span style="left:19px;top:413px;font-size:11px;line-height:11px;letter-spacing:-0.386px;width:185px;text-align:center;">Value</span><div style="left:30px;top:439px;width:160px;height:4px;background:#e7eaea;border:1px solid #d6d6d6;border-radius:1px"></div><div style="left:32px;top:436px;width:4px;height:9px;background:#f0f0f0;border:1px solid #959595;border-bottom:none"></div><div style="left:18px;top:457px;width:71px;height:20px;background:#fff;border:1px solid #ababab"></div><span style="left:24px;top:462px;font-size:11px;line-height:11px;">0.0000299</span><span style="left:95.5px;top:465px;font-size:11px;line-height:11px;letter-spacing:-1.284px;">BKPT</span><span style="left:18px;top:481px;font-size:11px;line-height:11px;letter-spacing:-0.183px;">V2_NEW_pt40_scaled-...</span><div style="left:155px;top:477px;width:48px;height:16px;border:1px solid #3399ff;border-radius:1px;background:linear-gradient(#f6f6f6 0,#ededed 50%,#e2e2e2 51%,#d9d9d9 100%)"></div><span style="left:155px;top:480.5px;font-size:11px;line-height:11px;width:48px;text-align:center;">Save</span><div style="left:18px;top:494px;width:71px;height:20px;background:#f0f0f0;border:1px solid #ababab"></div><span style="left:24px;top:499px;font-size:11px;line-height:11px;">0.0000135</span><div style="left:92px;top:497px;width:36px;height:16px;border:1px solid #acacac;border-radius:1px;background:linear-gradient(#f6f6f6 0,#ededed 50%,#e2e2e2 51%,#d9d9d9 100%)"></div><span style="left:92px;top:500.5px;font-size:11px;line-height:11px;letter-spacing:-0.122px;width:36px;text-align:center;">Copy</span><div style="left:155px;top:497px;width:48px;height:16px;border:1px solid #acacac;border-radius:1px;background:linear-gradient(#f6f6f6 0,#ededed 50%,#e2e2e2 51%,#d9d9d9 100%)"></div><span style="left:155px;top:500.5px;font-size:11px;line-height:11px;letter-spacing:-0.342px;width:48px;text-align:center;">Cancel</span><div style="left:228px;top:359px;width:211px;height:166px;background:#d7e4f2;border:1px solid #4a4a4a;border-radius:6px 6px 0 0;overflow:hidden;box-shadow:inset 1px 1px 0 #f4f8fc"><div style="left:1px;top:1px;width:208px;height:29px;background:linear-gradient(#bdcbdb,#d6e3f1)"></div></div><svg style="position:absolute;left:237px;top:371px;" width="18" height="12" viewBox="0 0 18 12"><rect x="1" y="2" width="16" height="8" rx="0.5" fill="#000"/><rect x="2.3" y="0" width="1.6" height="2.2" fill="#000"/><rect x="2.3" y="9.8" width="1.6" height="2.2" fill="#000"/><rect x="5.5" y="0" width="1.6" height="2.2" fill="#000"/><rect x="5.5" y="9.8" width="1.6" height="2.2" fill="#000"/><rect x="8.7" y="0" width="1.6" height="2.2" fill="#000"/><rect x="8.7" y="9.8" width="1.6" height="2.2" fill="#000"/><rect x="11.9" y="0" width="1.6" height="2.2" fill="#000"/><rect x="11.9" y="9.8" width="1.6" height="2.2" fill="#000"/><rect x="15.1" y="0" width="1.6" height="2.2" fill="#000"/><rect x="15.1" y="9.8" width="1.6" height="2.2" fill="#000"/></svg><span style="left:254px;top:370px;font-size:15px;line-height:15px;letter-spacing:-0.264px;width:143px;text-align:center;">Calculated CID</span><div style="left:397px;top:368px;width:32px;height:18px;border:1px solid #7b8aa8;border-radius:3px;background:linear-gradient(#c4d2e2,#d2dfee)"></div><svg style="position:absolute;left:407px;top:371px;" width="12" height="11" viewBox="0 0 12 11"><path d="M2.5 2.5l7 6M9.5 2.5l-7 6" stroke="#3a4252" stroke-width="4.4" stroke-linecap="round"/><path d="M2.5 2.5l7 6M9.5 2.5l-7 6" stroke="#f4f4f4" stroke-width="2.6" stroke-linecap="round"/></svg><div style="left:236px;top:389px;width:195px;height:128px;background:#f0f0f0"></div><div style="left:242px;top:396px;width:185px;height:32px;border-top:1px solid #a0a0a0;border-left:1px solid #a0a0a0;border-bottom:1px solid #fff;border-right:1px solid #fff"></div><span style="left:242px;top:399px;font-size:11px;line-height:11px;letter-spacing:-0.242px;width:185px;text-align:center;">Calculated CID</span><div style="left:253px;top:438px;width:160px;height:4px;background:#e7eaea;border:1px solid #d6d6d6;border-radius:1px"></div><div style="left:408px;top:435px;width:4px;height:9px;background:#f0f0f0;border:1px solid #959595;border-bottom:none"></div><div style="left:241px;top:456px;width:71px;height:20px;background:#fff;border:1px solid #ababab"></div><span style="left:247px;top:461px;font-size:11px;line-height:11px;">280.348</span><span style="left:318.5px;top:464px;font-size:11px;line-height:11px;letter-spacing:-0.418px;">CID</span><span style="left:241px;top:480px;font-size:11px;line-height:11px;letter-spacing:-0.183px;">V2_NEW_pt40_scaled-...</span><div style="left:378px;top:476px;width:48px;height:16px;border:1px solid #3399ff;border-radius:1px;background:linear-gradient(#f6f6f6 0,#ededed 50%,#e2e2e2 51%,#d9d9d9 100%)"></div><span style="left:378px;top:479.5px;font-size:11px;line-height:11px;width:48px;text-align:center;">Save</span><div style="left:241px;top:493px;width:71px;height:20px;background:#f0f0f0;border:1px solid #ababab"></div><span style="left:247px;top:498px;font-size:11px;line-height:11px;">113.518</span><div style="left:315px;top:496px;width:36px;height:16px;border:1px solid #acacac;border-radius:1px;background:linear-gradient(#f6f6f6 0,#ededed 50%,#e2e2e2 51%,#d9d9d9 100%)"></div><span style="left:315px;top:499.5px;font-size:11px;line-height:11px;letter-spacing:-0.122px;width:36px;text-align:center;">Copy</span><div style="left:378px;top:496px;width:48px;height:16px;border:1px solid #acacac;border-radius:1px;background:linear-gradient(#f6f6f6 0,#ededed 50%,#e2e2e2 51%,#d9d9d9 100%)"></div><span style="left:378px;top:499.5px;font-size:11px;line-height:11px;letter-spacing:-0.342px;width:48px;text-align:center;">Cancel</span><div style="left:972px;top:22px;width:211px;height:166px;background:#d7e4f2;border:1px solid #4a4a4a;border-radius:6px 6px 0 0;overflow:hidden;box-shadow:inset 1px 1px 0 #f4f8fc"><div style="left:1px;top:1px;width:208px;height:29px;background:linear-gradient(#bdcbdb,#d6e3f1)"></div></div><svg style="position:absolute;left:981px;top:34px;" width="18" height="12" viewBox="0 0 18 12"><rect x="1" y="2" width="16" height="8" rx="0.5" fill="#000"/><rect x="2.3" y="0" width="1.6" height="2.2" fill="#000"/><rect x="2.3" y="9.8" width="1.6" height="2.2" fill="#000"/><rect x="5.5" y="0" width="1.6" height="2.2" fill="#000"/><rect x="5.5" y="9.8" width="1.6" height="2.2" fill="#000"/><rect x="8.7" y="0" width="1.6" height="2.2" fill="#000"/><rect x="8.7" y="9.8" width="1.6" height="2.2" fill="#000"/><rect x="11.9" y="0" width="1.6" height="2.2" fill="#000"/><rect x="11.9" y="9.8" width="1.6" height="2.2" fill="#000"/><rect x="15.1" y="0" width="1.6" height="2.2" fill="#000"/><rect x="15.1" y="9.8" width="1.6" height="2.2" fill="#000"/></svg><span style="left:998px;top:33px;font-size:15px;line-height:15px;letter-spacing:-0.256px;width:143px;text-align:center;">**PASTE**Manifold...</span><div style="left:1141px;top:31px;width:32px;height:18px;border:1px solid #7b8aa8;border-radius:3px;background:linear-gradient(#c4d2e2,#d2dfee)"></div><svg style="position:absolute;left:1151px;top:34px;" width="12" height="11" viewBox="0 0 12 11"><path d="M2.5 2.5l7 6M9.5 2.5l-7 6" stroke="#3a4252" stroke-width="4.4" stroke-linecap="round"/><path d="M2.5 2.5l7 6M9.5 2.5l-7 6" stroke="#f4f4f4" stroke-width="2.6" stroke-linecap="round"/></svg><div style="left:980px;top:52px;width:195px;height:128px;background:#f0f0f0"></div><div style="left:986px;top:59px;width:185px;height:32px;border-top:1px solid #a0a0a0;border-left:1px solid #a0a0a0;border-bottom:1px solid #fff;border-right:1px solid #fff"></div><span style="left:986px;top:62px;font-size:11px;line-height:11px;letter-spacing:0.072px;width:185px;text-align:center;">**PASTE**Manifold Voume- ^</span><div style="left:997px;top:101px;width:160px;height:4px;background:#e7eaea;border:1px solid #d6d6d6;border-radius:1px"></div><div style="left:1021px;top:98px;width:4px;height:9px;background:#f0f0f0;border:1px solid #959595;border-bottom:none"></div><div style="left:985px;top:119px;width:71px;height:20px;background:#fff;border:1px solid #ababab"></div><span style="left:991px;top:124px;font-size:11px;line-height:11px;">5.0</span><span style="left:1062.5px;top:127px;font-size:11px;line-height:11px;letter-spacing:-0.151px;">Liters</span><span style="left:985px;top:143px;font-size:11px;line-height:11px;letter-spacing:-0.183px;">V2_NEW_pt40_scaled-...</span><div style="left:1122px;top:139px;width:48px;height:16px;border:1px solid #3399ff;border-radius:1px;background:linear-gradient(#f6f6f6 0,#ededed 50%,#e2e2e2 51%,#d9d9d9 100%)"></div><span style="left:1122px;top:142.5px;font-size:11px;line-height:11px;width:48px;text-align:center;">Save</span><div style="left:985px;top:156px;width:71px;height:20px;background:#f0f0f0;border:1px solid #ababab"></div><span style="left:991px;top:161px;font-size:11px;line-height:11px;">2.0</span><div style="left:1059px;top:159px;width:36px;height:16px;border:1px solid #acacac;border-radius:1px;background:linear-gradient(#f6f6f6 0,#ededed 50%,#e2e2e2 51%,#d9d9d9 100%)"></div><span style="left:1059px;top:162.5px;font-size:11px;line-height:11px;letter-spacing:-0.122px;width:36px;text-align:center;">Copy</span><div style="left:1122px;top:159px;width:48px;height:16px;border:1px solid #acacac;border-radius:1px;background:linear-gradient(#f6f6f6 0,#ededed 50%,#e2e2e2 51%,#d9d9d9 100%)"></div><span style="left:1122px;top:162.5px;font-size:11px;line-height:11px;letter-spacing:-0.342px;width:48px;text-align:center;">Cancel</span><div style="left:974px;top:200px;width:211px;height:166px;background:#d7e4f2;border:1px solid #4a4a4a;border-radius:6px 6px 0 0;overflow:hidden;box-shadow:inset 1px 1px 0 #f4f8fc"><div style="left:1px;top:1px;width:208px;height:29px;background:linear-gradient(#bdcbdb,#d6e3f1)"></div></div><svg style="position:absolute;left:983px;top:212px;" width="18" height="12" viewBox="0 0 18 12"><rect x="1" y="2" width="16" height="8" rx="0.5" fill="#000"/><rect x="2.3" y="0" width="1.6" height="2.2" fill="#000"/><rect x="2.3" y="9.8" width="1.6" height="2.2" fill="#000"/><rect x="5.5" y="0" width="1.6" height="2.2" fill="#000"/><rect x="5.5" y="9.8" width="1.6" height="2.2" fill="#000"/><rect x="8.7" y="0" width="1.6" height="2.2" fill="#000"/><rect x="8.7" y="9.8" width="1.6" height="2.2" fill="#000"/><rect x="11.9" y="0" width="1.6" height="2.2" fill="#000"/><rect x="11.9" y="9.8" width="1.6" height="2.2" fill="#000"/><rect x="15.1" y="0" width="1.6" height="2.2" fill="#000"/><rect x="15.1" y="9.8" width="1.6" height="2.2" fill="#000"/></svg><span style="left:1000px;top:211px;font-size:15px;line-height:15px;letter-spacing:-0.242px;width:143px;text-align:center;">Minimum Fuel Inje...</span><div style="left:1143px;top:209px;width:32px;height:18px;border:1px solid #7b8aa8;border-radius:3px;background:linear-gradient(#c4d2e2,#d2dfee)"></div><svg style="position:absolute;left:1153px;top:212px;" width="12" height="11" viewBox="0 0 12 11"><path d="M2.5 2.5l7 6M9.5 2.5l-7 6" stroke="#3a4252" stroke-width="4.4" stroke-linecap="round"/><path d="M2.5 2.5l7 6M9.5 2.5l-7 6" stroke="#f4f4f4" stroke-width="2.6" stroke-linecap="round"/></svg><div style="left:982px;top:230px;width:195px;height:128px;background:#f0f0f0"></div><div style="left:988px;top:237px;width:185px;height:32px;border-top:1px solid #a0a0a0;border-left:1px solid #a0a0a0;border-bottom:1px solid #fff;border-right:1px solid #fff"></div><span style="left:988px;top:240px;font-size:11px;line-height:11px;letter-spacing:-0.214px;width:185px;text-align:center;">Minimum Fuel Injector Pulsewidth</span><div style="left:999px;top:279px;width:160px;height:4px;background:#e7eaea;border:1px solid #d6d6d6;border-radius:1px"></div><div style="left:999px;top:276px;width:4px;height:9px;background:#f0f0f0;border:1px solid #959595;border-bottom:none"></div><div style="left:987px;top:297px;width:71px;height:20px;background:#fff;border:1px solid #ababab"></div><span style="left:993px;top:302px;font-size:11px;line-height:11px;">0.00012970</span><span style="left:1064.5px;top:305px;font-size:11px;line-height:11px;letter-spacing:-1.367px;">PW</span><span style="left:987px;top:321px;font-size:11px;line-height:11px;letter-spacing:-0.183px;">V2_NEW_pt40_scaled-...</span><div style="left:1124px;top:317px;width:48px;height:16px;border:1px solid #3399ff;border-radius:1px;background:linear-gradient(#f6f6f6 0,#ededed 50%,#e2e2e2 51%,#d9d9d9 100%)"></div><span style="left:1124px;top:320.5px;font-size:11px;line-height:11px;width:48px;text-align:center;">Save</span><div style="left:987px;top:334px;width:71px;height:20px;background:#f0f0f0;border:1px solid #ababab"></div><span style="left:993px;top:339px;font-size:11px;line-height:11px;">0.00056076</span><div style="left:1061px;top:337px;width:36px;height:16px;border:1px solid #acacac;border-radius:1px;background:linear-gradient(#f6f6f6 0,#ededed 50%,#e2e2e2 51%,#d9d9d9 100%)"></div><span style="left:1061px;top:340.5px;font-size:11px;line-height:11px;letter-spacing:-0.122px;width:36px;text-align:center;">Copy</span><div style="left:1124px;top:337px;width:48px;height:16px;border:1px solid #acacac;border-radius:1px;background:linear-gradient(#f6f6f6 0,#ededed 50%,#e2e2e2 51%,#d9d9d9 100%)"></div><span style="left:1124px;top:340.5px;font-size:11px;line-height:11px;letter-spacing:-0.342px;width:48px;text-align:center;">Cancel</span><div style="left:453px;top:17px;width:252px;height:600px;background:#d7e4f2;border:1px solid #4a4a4a;border-radius:6px 6px 0 0;overflow:hidden;box-shadow:inset 1px 1px 0 #f4f8fc"><div style="left:1px;top:1px;width:249px;height:29px;background:linear-gradient(#bdcbdb,#d6e3f1)"></div></div><svg style="position:absolute;left:462px;top:29px;" width="18" height="12" viewBox="0 0 18 12"><rect x="1" y="2" width="16" height="8" rx="0.5" fill="#000"/><rect x="2.3" y="0" width="1.6" height="2.2" fill="#000"/><rect x="2.3" y="9.8" width="1.6" height="2.2" fill="#000"/><rect x="5.5" y="0" width="1.6" height="2.2" fill="#000"/><rect x="5.5" y="9.8" width="1.6" height="2.2" fill="#000"/><rect x="8.7" y="0" width="1.6" height="2.2" fill="#000"/><rect x="8.7" y="9.8" width="1.6" height="2.2" fill="#000"/><rect x="11.9" y="0" width="1.6" height="2.2" fill="#000"/><rect x="11.9" y="9.8" width="1.6" height="2.2" fill="#000"/><rect x="15.1" y="0" width="1.6" height="2.2" fill="#000"/><rect x="15.1" y="9.8" width="1.6" height="2.2" fill="#000"/></svg><span style="left:479px;top:28px;font-size:15px;line-height:15px;letter-spacing:-0.726px;width:185px;text-align:center;">**PASTE/ACTUAL VALUE*...</span><div style="left:664px;top:27px;width:32px;height:18px;border:1px solid #7b8aa8;border-radius:3px;background:linear-gradient(#c4d2e2,#d2dfee)"></div><svg style="position:absolute;left:674px;top:30px;" width="12" height="11" viewBox="0 0 12 11"><path d="M2.5 2.5l7 6M9.5 2.5l-7 6" stroke="#3a4252" stroke-width="4.4" stroke-linecap="round"/><path d="M2.5 2.5l7 6M9.5 2.5l-7 6" stroke="#f4f4f4" stroke-width="2.6" stroke-linecap="round"/></svg><div style="left:461px;top:47px;width:237px;height:48px;background:#f4f5f7"></div><div style="left:472px;top:73px;width:226px;height:22px;background:#f0f0f0"></div><div style="left:465px;top:50px;width:2px;height:44px;background:repeating-linear-gradient(to bottom,#a8a8a8 0,#a8a8a8 2px,transparent 2px,transparent 4px)"></div><svg style="position:absolute;left:476px;top:53px;" width="14" height="14" viewBox="0 0 14 14"><g shape-rendering="crispEdges"><rect x="0" y="0" width="14" height="14" fill="#9c9c9c"/><rect x="3" y="1" width="8" height="6" fill="#f4f4f4"/><rect x="12" y="1" width="1" height="1" fill="#f4f4f4"/><rect x="8" y="10" width="2" height="3" fill="#f4f4f4"/></g></svg><svg style="position:absolute;left:500px;top:53px;" width="12" height="14" viewBox="0 0 12 14"><path d="M1 1L11 13M11 1L1 13" stroke="#f00000" stroke-width="2"/></svg><svg style="position:absolute;left:521px;top:53px;" width="16" height="15" viewBox="0 0 16 15"><g shape-rendering="crispEdges"><rect x="1" y="0" width="1" height="1" fill="#000"/><rect x="1" y="2" width="1" height="1" fill="#000"/><rect x="1" y="4" width="1" height="1" fill="#000"/><rect x="1" y="6" width="1" height="1" fill="#000"/><rect x="1" y="8" width="1" height="1" fill="#000"/><rect x="1" y="10" width="1" height="1" fill="#000"/><rect x="1" y="12" width="1" height="1" fill="#000"/><rect x="1" y="14" width="1" height="1" fill="#000"/><rect x="1" y="13" width="1" height="1" fill="#000"/><rect x="3" y="13" width="1" height="1" fill="#000"/><rect x="5" y="13" width="1" height="1" fill="#000"/><rect x="7" y="13" width="1" height="1" fill="#000"/><rect x="9" y="13" width="1" height="1" fill="#000"/><rect x="11" y="13" width="1" height="1" fill="#000"/><rect x="13" y="13" width="1" height="1" fill="#000"/><rect x="15" y="13" width="1" height="1" fill="#000"/></g><polyline points="1.5,4.5 4,5.5 6,8 8,6 10,8 12.5,7.5 15,3.5" fill="none" stroke="#f00000" stroke-width="1.4"/></svg><div style="left:541px;top:49px;width:23px;height:21px;background:#c8e0f8;border:1px solid #84bcee"></div><svg style="position:absolute;left:544px;top:52px;" width="17" height="16" viewBox="0 0 17 16"><path d="M8.5 1v13.5" stroke="#000" stroke-width="2"/><path d="M4.5 15h8" stroke="#000" stroke-width="2"/><path d="M2.5 4.5q6-2 12 0" fill="none" stroke="#000" stroke-width="1.4"/><path d="M2.5 4.5L0.8 10M2.5 4.5L4.8 10M14.5 4.5L12.2 10M14.5 4.5L16.2 10" stroke="#000" stroke-width="0.7"/><path d="M0.3 10h5q-0.5 2.5-2.5 2.5t-2.5-2.5z" fill="#e8e000" stroke="#000" stroke-width="0.8"/><path d="M11.7 10h5q-0.5 2.5-2.5 2.5t-2.5-2.5z" fill="#e8e000" stroke="#000" stroke-width="0.8"/></svg><svg style="position:absolute;left:568px;top:53px;" width="14" height="15" viewBox="0 0 14 15"><path d="M2 2h8M2 2v9M2 10.5h7" fill="none" stroke="#1010f0" stroke-width="2"/><path d="M6 0.5L1 14h12z" fill="none" stroke="#000" stroke-width="2" stroke-linejoin="miter"/></svg><span style="left:477px;top:79px;font-size:11px;line-height:11px;letter-spacing:-0.194px;">Function:</span><div style="left:526px;top:74px;width:106px;height:20px;border:1px solid #acacac;background:linear-gradient(#f2f2f2,#e5e5e5)"></div><span style="left:529px;top:79.5px;font-size:11px;line-height:11px;letter-spacing:-0.345px;">Fill w/ Value</span><svg style="position:absolute;left:619.0px;top:78.5px;" width="11.0" height="11.0" viewBox="0 0 11.0 11.0"><polyline points="2,3.75 5.5,7.25 9.0,3.75" fill="none" stroke="#404040" stroke-width="2"/></svg><span style="left:638.5px;top:79px;font-size:11px;line-height:11px;letter-spacing:-0.396px;">Value:</span><div style="left:669px;top:74px;width:30px;height:20px;background:#fff;border:1px solid #acacac;border-right:none"></div><span style="left:675.5px;top:79.5px;font-size:11px;line-height:11px;">18</span><div style="left:461px;top:97px;width:236px;height:520px;background:#fff;border-top:2px solid #5a5a5a;border-left:2px solid #5a5a5a"></div><div style="left:463px;top:99px;width:232px;height:14px;background:#f0f0f0;border:1px solid #a0a0a0;border-top-color:#fff;border-left-color:#fff"></div><div style="left:463px;top:99px;width:232px;height:13px;overflow:hidden"><span style="left:3px;top:2px;font-size:12px;line-height:12px;font-weight:700;letter-spacing:0.029px;">**PASTE/ACTUAL VALUE**MAF Trans...</span></div><div style="left:669px;top:114px;width:28px;height:520px;background:#404040"></div><div style="left:463px;top:114px;width:45px;height:14px;background:#f0f0f0;border:1px solid #a0a0a0;border-top-color:#fff;border-left-color:#fff;"></div><div style="left:509px;top:114px;width:80px;height:14px;background:#d8d8d8;border:1px solid #a0a0a0;border-top-color:#fff;border-left-color:#fff;"></div><span style="left:509px;top:116.5px;font-size:11px;line-height:11px;width:80px;text-align:center;">Volts</span><div style="left:590px;top:114px;width:79px;height:14px;background:#f0f0f0;border:1px solid #a0a0a0;border-top-color:#fff;border-left-color:#fff;"></div><span style="left:590px;top:116.5px;font-size:11px;line-height:11px;width:79px;text-align:center;">lbs/min</span><div style="left:508px;top:128px;width:161px;height:451px;background:#d6d6d6"></div><div style="left:463px;top:129px;width:45px;height:14px;background:#d8d8d8;border:1px solid #a0a0a0;border-top-color:#fff;border-left-color:#fff;"></div><span style="left:463px;top:131px;font-size:11px;line-height:11px;width:42px;text-align:right;">30</span><div style="left:509px;top:130px;width:79px;height:13px;background:#f5f3d6"></div><div style="left:590px;top:130px;width:78px;height:13px;background:#f5f3d6"></div><span style="left:509px;top:131px;font-size:11px;line-height:11px;width:78px;text-align:right;letter-spacing:-0.35px;">4.9999</span><span style="left:590px;top:131px;font-size:11px;line-height:11px;width:77px;text-align:right;letter-spacing:-0.35px;">18.9397</span><div style="left:463px;top:144px;width:45px;height:14px;background:#f0f0f0;border:1px solid #a0a0a0;border-top-color:#fff;border-left-color:#fff;"></div><span style="left:463px;top:146px;font-size:11px;line-height:11px;width:42px;text-align:right;">29</span><div style="left:509px;top:145px;width:79px;height:13px;background:#f5f3d6"></div><div style="left:590px;top:145px;width:78px;height:13px;background:#f5f3d6"></div><span style="left:509px;top:146px;font-size:11px;line-height:11px;width:78px;text-align:right;letter-spacing:-0.35px;">4.9951</span><span style="left:590px;top:146px;font-size:11px;line-height:11px;width:77px;text-align:right;letter-spacing:-0.35px;">18.9397</span><div style="left:463px;top:159px;width:45px;height:14px;background:#f0f0f0;border:1px solid #a0a0a0;border-top-color:#fff;border-left-color:#fff;"></div><span style="left:463px;top:161px;font-size:11px;line-height:11px;width:42px;text-align:right;">28</span><div style="left:509px;top:160px;width:79px;height:13px;background:#f5f3d6"></div><div style="left:590px;top:160px;width:78px;height:13px;background:#f5f3d6"></div><span style="left:509px;top:161px;font-size:11px;line-height:11px;width:78px;text-align:right;letter-spacing:-0.35px;">4.7500</span><span style="left:590px;top:161px;font-size:11px;line-height:11px;width:77px;text-align:right;letter-spacing:-0.35px;">16.2662</span><div style="left:463px;top:174px;width:45px;height:14px;background:#f0f0f0;border:1px solid #a0a0a0;border-top-color:#fff;border-left-color:#fff;"></div><span style="left:463px;top:176px;font-size:11px;line-height:11px;width:42px;text-align:right;">27</span><div style="left:509px;top:175px;width:79px;height:13px;background:#f5f3d6"></div><div style="left:590px;top:175px;width:78px;height:13px;background:#f5f3d6"></div><span style="left:509px;top:176px;font-size:11px;line-height:11px;width:78px;text-align:right;letter-spacing:-0.35px;">4.5000</span><span style="left:590px;top:176px;font-size:11px;line-height:11px;width:77px;text-align:right;letter-spacing:-0.35px;">13.8863</span><div style="left:463px;top:189px;width:45px;height:14px;background:#f0f0f0;border:1px solid #a0a0a0;border-top-color:#fff;border-left-color:#fff;"></div><span style="left:463px;top:191px;font-size:11px;line-height:11px;width:42px;text-align:right;">26</span><div style="left:509px;top:190px;width:79px;height:13px;background:#f5f3d6"></div><div style="left:590px;top:190px;width:78px;height:13px;background:#f5f3d6"></div><span style="left:509px;top:191px;font-size:11px;line-height:11px;width:78px;text-align:right;letter-spacing:-0.35px;">4.2500</span><span style="left:590px;top:191px;font-size:11px;line-height:11px;width:77px;text-align:right;letter-spacing:-0.35px;">11.7738</span><div style="left:463px;top:204px;width:45px;height:14px;background:#f0f0f0;border:1px solid #a0a0a0;border-top-color:#fff;border-left-color:#fff;"></div><span style="left:463px;top:206px;font-size:11px;line-height:11px;width:42px;text-align:right;">25</span><div style="left:509px;top:205px;width:79px;height:13px;background:#f5f3d6"></div><div style="left:590px;top:205px;width:78px;height:13px;background:#f5f3d6"></div><span style="left:509px;top:206px;font-size:11px;line-height:11px;width:78px;text-align:right;letter-spacing:-0.35px;">4.0000</span><span style="left:590px;top:206px;font-size:11px;line-height:11px;width:77px;text-align:right;letter-spacing:-0.35px;">9.9076</span><div style="left:463px;top:219px;width:45px;height:14px;background:#f0f0f0;border:1px solid #a0a0a0;border-top-color:#fff;border-left-color:#fff;"></div><span style="left:463px;top:221px;font-size:11px;line-height:11px;width:42px;text-align:right;">24</span><div style="left:509px;top:220px;width:79px;height:13px;background:#f5f3d6"></div><div style="left:590px;top:220px;width:78px;height:13px;background:#f5f3d6"></div><span style="left:509px;top:221px;font-size:11px;line-height:11px;width:78px;text-align:right;letter-spacing:-0.35px;">3.8000</span><span style="left:590px;top:221px;font-size:11px;line-height:11px;width:77px;text-align:right;letter-spacing:-0.35px;">8.5813</span><div style="left:463px;top:234px;width:45px;height:14px;background:#f0f0f0;border:1px solid #a0a0a0;border-top-color:#fff;border-left-color:#fff;"></div><span style="left:463px;top:236px;font-size:11px;line-height:11px;width:42px;text-align:right;">23</span><div style="left:509px;top:235px;width:79px;height:13px;background:#f5f3d6"></div><div style="left:590px;top:235px;width:78px;height:13px;background:#f5f3d6"></div><span style="left:509px;top:236px;font-size:11px;line-height:11px;width:78px;text-align:right;letter-spacing:-0.35px;">3.6000</span><span style="left:590px;top:236px;font-size:11px;line-height:11px;width:77px;text-align:right;letter-spacing:-0.35px;">7.3914</span><div style="left:463px;top:249px;width:45px;height:14px;background:#f0f0f0;border:1px solid #a0a0a0;border-top-color:#fff;border-left-color:#fff;"></div><span style="left:463px;top:251px;font-size:11px;line-height:11px;width:42px;text-align:right;">22</span><div style="left:509px;top:250px;width:79px;height:13px;background:#f5f3d6"></div><div style="left:590px;top:250px;width:78px;height:13px;background:#f5f3d6"></div><span style="left:509px;top:251px;font-size:11px;line-height:11px;width:78px;text-align:right;letter-spacing:-0.35px;">3.4000</span><span style="left:590px;top:251px;font-size:11px;line-height:11px;width:77px;text-align:right;letter-spacing:-0.35px;">6.4321</span><div style="left:463px;top:264px;width:45px;height:14px;background:#f0f0f0;border:1px solid #a0a0a0;border-top-color:#fff;border-left-color:#fff;"></div><span style="left:463px;top:266px;font-size:11px;line-height:11px;width:42px;text-align:right;">21</span><div style="left:509px;top:265px;width:79px;height:13px;background:#f5f3d6"></div><div style="left:590px;top:265px;width:78px;height:13px;background:#f5f3d6"></div><span style="left:509px;top:266px;font-size:11px;line-height:11px;width:78px;text-align:right;letter-spacing:-0.35px;">3.2000</span><span style="left:590px;top:266px;font-size:11px;line-height:11px;width:77px;text-align:right;letter-spacing:-0.35px;">5.5619</span><div style="left:463px;top:279px;width:45px;height:14px;background:#f0f0f0;border:1px solid #a0a0a0;border-top-color:#fff;border-left-color:#fff;"></div><span style="left:463px;top:281px;font-size:11px;line-height:11px;width:42px;text-align:right;">20</span><div style="left:509px;top:280px;width:79px;height:13px;background:#f5f3d6"></div><div style="left:590px;top:280px;width:78px;height:13px;background:#f5f3d6"></div><span style="left:509px;top:281px;font-size:11px;line-height:11px;width:78px;text-align:right;letter-spacing:-0.35px;">3.0000</span><span style="left:590px;top:281px;font-size:11px;line-height:11px;width:77px;text-align:right;letter-spacing:-0.35px;">4.5921</span><div style="left:463px;top:294px;width:45px;height:14px;background:#f0f0f0;border:1px solid #a0a0a0;border-top-color:#fff;border-left-color:#fff;"></div><span style="left:463px;top:296px;font-size:11px;line-height:11px;width:42px;text-align:right;">19</span><div style="left:509px;top:295px;width:79px;height:13px;background:#f5f3d6"></div><div style="left:590px;top:295px;width:78px;height:13px;background:#f5f3d6"></div><span style="left:509px;top:296px;font-size:11px;line-height:11px;width:78px;text-align:right;letter-spacing:-0.35px;">2.8000</span><span style="left:590px;top:296px;font-size:11px;line-height:11px;width:77px;text-align:right;letter-spacing:-0.35px;">3.8582</span><div style="left:463px;top:309px;width:45px;height:14px;background:#f0f0f0;border:1px solid #a0a0a0;border-top-color:#fff;border-left-color:#fff;"></div><span style="left:463px;top:311px;font-size:11px;line-height:11px;width:42px;text-align:right;">18</span><div style="left:509px;top:310px;width:79px;height:13px;background:#f5f3d6"></div><div style="left:590px;top:310px;width:78px;height:13px;background:#f5f3d6"></div><span style="left:509px;top:311px;font-size:11px;line-height:11px;width:78px;text-align:right;letter-spacing:-0.35px;">2.6000</span><span style="left:590px;top:311px;font-size:11px;line-height:11px;width:77px;text-align:right;letter-spacing:-0.35px;">3.1767</span><div style="left:463px;top:324px;width:45px;height:14px;background:#f0f0f0;border:1px solid #a0a0a0;border-top-color:#fff;border-left-color:#fff;"></div><span style="left:463px;top:326px;font-size:11px;line-height:11px;width:42px;text-align:right;">17</span><div style="left:509px;top:325px;width:79px;height:13px;background:#f5f3d6"></div><div style="left:590px;top:325px;width:78px;height:13px;background:#f5f3d6"></div><span style="left:509px;top:326px;font-size:11px;line-height:11px;width:78px;text-align:right;letter-spacing:-0.35px;">2.4000</span><span style="left:590px;top:326px;font-size:11px;line-height:11px;width:77px;text-align:right;letter-spacing:-0.35px;">2.6053</span><div style="left:463px;top:339px;width:45px;height:14px;background:#f0f0f0;border:1px solid #a0a0a0;border-top-color:#fff;border-left-color:#fff;"></div><span style="left:463px;top:341px;font-size:11px;line-height:11px;width:42px;text-align:right;">16</span><div style="left:509px;top:340px;width:79px;height:13px;background:#f5f3d6"></div><div style="left:590px;top:340px;width:78px;height:13px;background:#f5f3d6"></div><span style="left:509px;top:341px;font-size:11px;line-height:11px;width:78px;text-align:right;letter-spacing:-0.35px;">2.2000</span><span style="left:590px;top:341px;font-size:11px;line-height:11px;width:77px;text-align:right;letter-spacing:-0.35px;">2.0811</span><div style="left:463px;top:354px;width:45px;height:14px;background:#f0f0f0;border:1px solid #a0a0a0;border-top-color:#fff;border-left-color:#fff;"></div><span style="left:463px;top:356px;font-size:11px;line-height:11px;width:42px;text-align:right;">15</span><div style="left:509px;top:355px;width:79px;height:13px;background:#f5f3d6"></div><div style="left:590px;top:355px;width:78px;height:13px;background:#f5f3d6"></div><span style="left:509px;top:356px;font-size:11px;line-height:11px;width:78px;text-align:right;letter-spacing:-0.35px;">2.1000</span><span style="left:590px;top:356px;font-size:11px;line-height:11px;width:77px;text-align:right;letter-spacing:-0.35px;">1.8767</span><div style="left:463px;top:369px;width:45px;height:14px;background:#f0f0f0;border:1px solid #a0a0a0;border-top-color:#fff;border-left-color:#fff;"></div><span style="left:463px;top:371px;font-size:11px;line-height:11px;width:42px;text-align:right;">14</span><div style="left:509px;top:370px;width:79px;height:13px;background:#f5f3d6"></div><div style="left:590px;top:370px;width:78px;height:13px;background:#f5f3d6"></div><span style="left:509px;top:371px;font-size:11px;line-height:11px;width:78px;text-align:right;letter-spacing:-0.35px;">1.9000</span><span style="left:590px;top:371px;font-size:11px;line-height:11px;width:77px;text-align:right;letter-spacing:-0.35px;">1.4835</span><div style="left:463px;top:384px;width:45px;height:14px;background:#f0f0f0;border:1px solid #a0a0a0;border-top-color:#fff;border-left-color:#fff;"></div><span style="left:463px;top:386px;font-size:11px;line-height:11px;width:42px;text-align:right;">13</span><div style="left:509px;top:385px;width:79px;height:13px;background:#f5f3d6"></div><div style="left:590px;top:385px;width:78px;height:13px;background:#f5f3d6"></div><span style="left:509px;top:386px;font-size:11px;line-height:11px;width:78px;text-align:right;letter-spacing:-0.35px;">1.7000</span><span style="left:590px;top:386px;font-size:11px;line-height:11px;width:77px;text-align:right;letter-spacing:-0.35px;">1.1637</span><div style="left:463px;top:399px;width:45px;height:14px;background:#f0f0f0;border:1px solid #a0a0a0;border-top-color:#fff;border-left-color:#fff;"></div><span style="left:463px;top:401px;font-size:11px;line-height:11px;width:42px;text-align:right;">12</span><div style="left:509px;top:400px;width:79px;height:13px;background:#f5f3d6"></div><div style="left:590px;top:400px;width:78px;height:13px;background:#f5f3d6"></div><span style="left:509px;top:401px;font-size:11px;line-height:11px;width:78px;text-align:right;letter-spacing:-0.35px;">1.6000</span><span style="left:590px;top:401px;font-size:11px;line-height:11px;width:77px;text-align:right;letter-spacing:-0.35px;">1.0170</span><div style="left:463px;top:414px;width:45px;height:14px;background:#f0f0f0;border:1px solid #a0a0a0;border-top-color:#fff;border-left-color:#fff;"></div><span style="left:463px;top:416px;font-size:11px;line-height:11px;width:42px;text-align:right;">11</span><div style="left:509px;top:415px;width:79px;height:13px;background:#f5f3d6"></div><div style="left:590px;top:415px;width:78px;height:13px;background:#f5f3d6"></div><span style="left:509px;top:416px;font-size:11px;line-height:11px;width:78px;text-align:right;letter-spacing:-0.35px;">1.4000</span><span style="left:590px;top:416px;font-size:11px;line-height:11px;width:77px;text-align:right;letter-spacing:-0.35px;">0.7811</span><div style="left:463px;top:429px;width:45px;height:14px;background:#f0f0f0;border:1px solid #a0a0a0;border-top-color:#fff;border-left-color:#fff;"></div><span style="left:463px;top:431px;font-size:11px;line-height:11px;width:42px;text-align:right;">10</span><div style="left:509px;top:430px;width:79px;height:13px;background:#f5f3d6"></div><div style="left:590px;top:430px;width:78px;height:13px;background:#f5f3d6"></div><span style="left:509px;top:431px;font-size:11px;line-height:11px;width:78px;text-align:right;letter-spacing:-0.35px;">1.3000</span><span style="left:590px;top:431px;font-size:11px;line-height:11px;width:77px;text-align:right;letter-spacing:-0.35px;">0.6710</span><div style="left:463px;top:444px;width:45px;height:14px;background:#f0f0f0;border:1px solid #a0a0a0;border-top-color:#fff;border-left-color:#fff;"></div><span style="left:463px;top:446px;font-size:11px;line-height:11px;width:42px;text-align:right;">9</span><div style="left:509px;top:445px;width:79px;height:13px;background:#f5f3d6"></div><div style="left:590px;top:445px;width:78px;height:13px;background:#f5f3d6"></div><span style="left:509px;top:446px;font-size:11px;line-height:11px;width:78px;text-align:right;letter-spacing:-0.35px;">1.2000</span><span style="left:590px;top:446px;font-size:11px;line-height:11px;width:77px;text-align:right;letter-spacing:-0.35px;">0.5819</span><div style="left:463px;top:459px;width:45px;height:14px;background:#f0f0f0;border:1px solid #a0a0a0;border-top-color:#fff;border-left-color:#fff;"></div><span style="left:463px;top:461px;font-size:11px;line-height:11px;width:42px;text-align:right;">8</span><div style="left:509px;top:460px;width:79px;height:13px;background:#f5f3d6"></div><div style="left:590px;top:460px;width:78px;height:13px;background:#f5f3d6"></div><span style="left:509px;top:461px;font-size:11px;line-height:11px;width:78px;text-align:right;letter-spacing:-0.35px;">1.0000</span><span style="left:590px;top:461px;font-size:11px;line-height:11px;width:77px;text-align:right;letter-spacing:-0.35px;">0.4036</span><div style="left:463px;top:474px;width:45px;height:14px;background:#f0f0f0;border:1px solid #a0a0a0;border-top-color:#fff;border-left-color:#fff;"></div><span style="left:463px;top:476px;font-size:11px;line-height:11px;width:42px;text-align:right;">7</span><div style="left:509px;top:475px;width:79px;height:13px;background:#f5f3d6"></div><div style="left:590px;top:475px;width:78px;height:13px;background:#f5f3d6"></div><span style="left:509px;top:476px;font-size:11px;line-height:11px;width:78px;text-align:right;letter-spacing:-0.35px;">0.9000</span><span style="left:590px;top:476px;font-size:11px;line-height:11px;width:77px;text-align:right;letter-spacing:-0.35px;">0.3250</span><div style="left:463px;top:489px;width:45px;height:14px;background:#f0f0f0;border:1px solid #a0a0a0;border-top-color:#fff;border-left-color:#fff;"></div><span style="left:463px;top:491px;font-size:11px;line-height:11px;width:42px;text-align:right;">6</span><div style="left:509px;top:490px;width:79px;height:13px;background:#f5f3d6"></div><div style="left:590px;top:490px;width:78px;height:13px;background:#f5f3d6"></div><span style="left:509px;top:491px;font-size:11px;line-height:11px;width:78px;text-align:right;letter-spacing:-0.35px;">0.8000</span><span style="left:590px;top:491px;font-size:11px;line-height:11px;width:77px;text-align:right;letter-spacing:-0.35px;">0.2673</span><div style="left:463px;top:504px;width:45px;height:14px;background:#f0f0f0;border:1px solid #a0a0a0;border-top-color:#fff;border-left-color:#fff;"></div><span style="left:463px;top:506px;font-size:11px;line-height:11px;width:42px;text-align:right;">5</span><div style="left:509px;top:505px;width:79px;height:13px;background:#f5f3d6"></div><div style="left:590px;top:505px;width:78px;height:13px;background:#f5f3d6"></div><span style="left:509px;top:506px;font-size:11px;line-height:11px;width:78px;text-align:right;letter-spacing:-0.35px;">0.7000</span><span style="left:590px;top:506px;font-size:11px;line-height:11px;width:77px;text-align:right;letter-spacing:-0.35px;">0.2097</span><div style="left:463px;top:519px;width:45px;height:14px;background:#f0f0f0;border:1px solid #a0a0a0;border-top-color:#fff;border-left-color:#fff;"></div><span style="left:463px;top:521px;font-size:11px;line-height:11px;width:42px;text-align:right;">4</span><div style="left:509px;top:520px;width:79px;height:13px;background:#f5f3d6"></div><div style="left:590px;top:520px;width:78px;height:13px;background:#f5f3d6"></div><span style="left:509px;top:521px;font-size:11px;line-height:11px;width:78px;text-align:right;letter-spacing:-0.35px;">0.6000</span><span style="left:590px;top:521px;font-size:11px;line-height:11px;width:77px;text-align:right;letter-spacing:-0.35px;">0.1677</span><div style="left:463px;top:534px;width:45px;height:14px;background:#f0f0f0;border:1px solid #a0a0a0;border-top-color:#fff;border-left-color:#fff;"></div><span style="left:463px;top:536px;font-size:11px;line-height:11px;width:42px;text-align:right;">3</span><div style="left:509px;top:535px;width:79px;height:13px;background:#f5f3d6"></div><div style="left:590px;top:535px;width:78px;height:13px;background:#f5f3d6"></div><span style="left:509px;top:536px;font-size:11px;line-height:11px;width:78px;text-align:right;letter-spacing:-0.35px;">0.4950</span><span style="left:590px;top:536px;font-size:11px;line-height:11px;width:77px;text-align:right;letter-spacing:-0.35px;">0.1468</span><div style="left:463px;top:549px;width:45px;height:14px;background:#f0f0f0;border:1px solid #a0a0a0;border-top-color:#fff;border-left-color:#fff;"></div><span style="left:463px;top:551px;font-size:11px;line-height:11px;width:42px;text-align:right;">2</span><div style="left:509px;top:550px;width:79px;height:13px;background:#f5f3d6"></div><div style="left:590px;top:550px;width:78px;height:13px;background:#f5f3d6"></div><span style="left:509px;top:551px;font-size:11px;line-height:11px;width:78px;text-align:right;letter-spacing:-0.35px;">0.0000</span><span style="left:590px;top:551px;font-size:11px;line-height:11px;width:77px;text-align:right;letter-spacing:-0.35px;">0.1468</span><div style="left:463px;top:564px;width:45px;height:14px;background:#f0f0f0;border:1px solid #a0a0a0;border-top-color:#fff;border-left-color:#fff;"></div><span style="left:463px;top:566px;font-size:11px;line-height:11px;width:42px;text-align:right;">1</span><div style="left:509px;top:565px;width:79px;height:13px;background:#f5f3d6"></div><div style="left:590px;top:565px;width:78px;height:13px;background:#f5f3d6"></div><span style="left:509px;top:566px;font-size:11px;line-height:11px;width:78px;text-align:right;letter-spacing:-0.35px;">0.0000</span><span style="left:590px;top:566px;font-size:11px;line-height:11px;width:77px;text-align:right;letter-spacing:-0.35px;">0.1468</span><div style="left:461px;top:579px;width:236px;height:3px;background:#404040"></div><div style="left:509px;top:128px;width:81px;height:16px;background:#d8d8d8;border:1px solid #1a1a1a"></div><span style="left:509px;top:131px;font-size:11px;line-height:11px;width:78px;text-align:right;letter-spacing:-0.35px;">4.9999</span><div style="left:715px;top:18px;width:252px;height:600px;background:#d7e4f2;border:1px solid #4a4a4a;border-radius:6px 6px 0 0;overflow:hidden;box-shadow:inset 1px 1px 0 #f4f8fc"><div style="left:1px;top:1px;width:249px;height:29px;background:linear-gradient(#bdcbdb,#d6e3f1)"></div></div><svg style="position:absolute;left:724px;top:30px;" width="18" height="12" viewBox="0 0 18 12"><rect x="1" y="2" width="16" height="8" rx="0.5" fill="#000"/><rect x="2.3" y="0" width="1.6" height="2.2" fill="#000"/><rect x="2.3" y="9.8" width="1.6" height="2.2" fill="#000"/><rect x="5.5" y="0" width="1.6" height="2.2" fill="#000"/><rect x="5.5" y="9.8" width="1.6" height="2.2" fill="#000"/><rect x="8.7" y="0" width="1.6" height="2.2" fill="#000"/><rect x="8.7" y="9.8" width="1.6" height="2.2" fill="#000"/><rect x="11.9" y="0" width="1.6" height="2.2" fill="#000"/><rect x="11.9" y="9.8" width="1.6" height="2.2" fill="#000"/><rect x="15.1" y="0" width="1.6" height="2.2" fill="#000"/><rect x="15.1" y="9.8" width="1.6" height="2.2" fill="#000"/></svg><span style="left:741px;top:29px;font-size:15px;line-height:15px;letter-spacing:-0.825px;width:185px;text-align:center;">**COPY/SCALED VALUE**...</span><div style="left:926px;top:28px;width:32px;height:18px;border:1px solid #7b8aa8;border-radius:3px;background:linear-gradient(#c4d2e2,#d2dfee)"></div><svg style="position:absolute;left:936px;top:31px;" width="12" height="11" viewBox="0 0 12 11"><path d="M2.5 2.5l7 6M9.5 2.5l-7 6" stroke="#3a4252" stroke-width="4.4" stroke-linecap="round"/><path d="M2.5 2.5l7 6M9.5 2.5l-7 6" stroke="#f4f4f4" stroke-width="2.6" stroke-linecap="round"/></svg><div style="left:723px;top:48px;width:237px;height:48px;background:#f4f5f7"></div><div style="left:734px;top:74px;width:226px;height:22px;background:#f0f0f0"></div><div style="left:727px;top:51px;width:2px;height:44px;background:repeating-linear-gradient(to bottom,#a8a8a8 0,#a8a8a8 2px,transparent 2px,transparent 4px)"></div><svg style="position:absolute;left:738px;top:54px;" width="14" height="14" viewBox="0 0 14 14"><g shape-rendering="crispEdges"><rect x="0" y="0" width="14" height="14" fill="#000"/><rect x="1" y="1" width="12" height="9" fill="#808000"/><rect x="3" y="1" width="8" height="5" fill="#fff"/><rect x="12" y="1" width="1" height="1" fill="#fff"/><rect x="2" y="9" width="10" height="4" fill="#000"/><rect x="8" y="10" width="2" height="3" fill="#fff"/></g></svg><svg style="position:absolute;left:762px;top:54px;" width="12" height="14" viewBox="0 0 12 14"><path d="M1 1L11 13M11 1L1 13" stroke="#f00000" stroke-width="2"/></svg><svg style="position:absolute;left:783px;top:54px;" width="16" height="15" viewBox="0 0 16 15"><g shape-rendering="crispEdges"><rect x="1" y="0" width="1" height="1" fill="#000"/><rect x="1" y="2" width="1" height="1" fill="#000"/><rect x="1" y="4" width="1" height="1" fill="#000"/><rect x="1" y="6" width="1" height="1" fill="#000"/><rect x="1" y="8" width="1" height="1" fill="#000"/><rect x="1" y="10" width="1" height="1" fill="#000"/><rect x="1" y="12" width="1" height="1" fill="#000"/><rect x="1" y="14" width="1" height="1" fill="#000"/><rect x="1" y="13" width="1" height="1" fill="#000"/><rect x="3" y="13" width="1" height="1" fill="#000"/><rect x="5" y="13" width="1" height="1" fill="#000"/><rect x="7" y="13" width="1" height="1" fill="#000"/><rect x="9" y="13" width="1" height="1" fill="#000"/><rect x="11" y="13" width="1" height="1" fill="#000"/><rect x="13" y="13" width="1" height="1" fill="#000"/><rect x="15" y="13" width="1" height="1" fill="#000"/></g><polyline points="1.5,4.5 4,5.5 6,8 8,6 10,8 12.5,7.5 15,3.5" fill="none" stroke="#f00000" stroke-width="1.4"/></svg><svg style="position:absolute;left:806px;top:53px;" width="17" height="16" viewBox="0 0 17 16"><path d="M8.5 1v13.5" stroke="#000" stroke-width="2"/><path d="M4.5 15h8" stroke="#000" stroke-width="2"/><path d="M2.5 4.5q6-2 12 0" fill="none" stroke="#000" stroke-width="1.4"/><path d="M2.5 4.5L0.8 10M2.5 4.5L4.8 10M14.5 4.5L12.2 10M14.5 4.5L16.2 10" stroke="#000" stroke-width="0.7"/><path d="M0.3 10h5q-0.5 2.5-2.5 2.5t-2.5-2.5z" fill="#e8e000" stroke="#000" stroke-width="0.8"/><path d="M11.7 10h5q-0.5 2.5-2.5 2.5t-2.5-2.5z" fill="#e8e000" stroke="#000" stroke-width="0.8"/></svg><svg style="position:absolute;left:830px;top:54px;" width="14" height="15" viewBox="0 0 14 15"><path d="M2 2h8M2 2v9M2 10.5h7" fill="none" stroke="#1010f0" stroke-width="2"/><path d="M6 0.5L1 14h12z" fill="none" stroke="#000" stroke-width="2" stroke-linejoin="miter"/></svg><span style="left:739px;top:80px;font-size:11px;line-height:11px;letter-spacing:-0.194px;">Function:</span><div style="left:788px;top:75px;width:106px;height:20px;border:1px solid #acacac;background:linear-gradient(#f2f2f2,#e5e5e5)"></div><span style="left:791px;top:80.5px;font-size:11px;line-height:11px;letter-spacing:-0.345px;">Fill w/ Value</span><svg style="position:absolute;left:881.0px;top:79.5px;" width="11.0" height="11.0" viewBox="0 0 11.0 11.0"><polyline points="2,3.75 5.5,7.25 9.0,3.75" fill="none" stroke="#404040" stroke-width="2"/></svg><span style="left:900.5px;top:80px;font-size:11px;line-height:11px;letter-spacing:-0.396px;">Value:</span><div style="left:931px;top:75px;width:30px;height:20px;background:#fff;border:1px solid #acacac;border-right:none"></div><span style="left:937.5px;top:80.5px;font-size:11px;line-height:11px;">18</span><div style="left:723px;top:98px;width:236px;height:520px;background:#fff;border-top:2px solid #5a5a5a;border-left:2px solid #5a5a5a"></div><div style="left:725px;top:100px;width:232px;height:14px;background:#f0f0f0;border:1px solid #a0a0a0;border-top-color:#fff;border-left-color:#fff"></div><div style="left:725px;top:100px;width:232px;height:13px;overflow:hidden"><span style="left:3px;top:2px;font-size:12px;line-height:12px;font-weight:700;letter-spacing:0.064px;">**COPY/SCALED VALUE**MAF Transf...</span></div><div style="left:931px;top:115px;width:28px;height:520px;background:#404040"></div><div style="left:725px;top:115px;width:45px;height:14px;background:#f0f0f0;border:1px solid #a0a0a0;border-top-color:#fff;border-left-color:#fff;"></div><div style="left:771px;top:115px;width:80px;height:14px;background:#d8d8d8;border:1px solid #a0a0a0;border-top-color:#fff;border-left-color:#fff;"></div><span style="left:771px;top:117.5px;font-size:11px;line-height:11px;width:80px;text-align:center;">Volts</span><div style="left:852px;top:115px;width:79px;height:14px;background:#f0f0f0;border:1px solid #a0a0a0;border-top-color:#fff;border-left-color:#fff;"></div><span style="left:852px;top:117.5px;font-size:11px;line-height:11px;width:79px;text-align:center;">lbs/min</span><div style="left:770px;top:129px;width:161px;height:451px;background:#d6d6d6"></div><div style="left:725px;top:130px;width:45px;height:14px;background:#d8d8d8;border:1px solid #a0a0a0;border-top-color:#fff;border-left-color:#fff;"></div><span style="left:725px;top:132px;font-size:11px;line-height:11px;width:42px;text-align:right;">30</span><div style="left:771px;top:131px;width:79px;height:13px;background:#ffffff"></div><div style="left:852px;top:131px;width:78px;height:13px;background:#ffffff"></div><span style="left:771px;top:132px;font-size:11px;line-height:11px;width:78px;text-align:right;letter-spacing:-0.35px;">4.9999</span><span style="left:852px;top:132px;font-size:11px;line-height:11px;width:77px;text-align:right;letter-spacing:-0.35px;">48.2064</span><div style="left:725px;top:145px;width:45px;height:14px;background:#f0f0f0;border:1px solid #a0a0a0;border-top-color:#fff;border-left-color:#fff;"></div><span style="left:725px;top:147px;font-size:11px;line-height:11px;width:42px;text-align:right;">29</span><div style="left:771px;top:146px;width:79px;height:13px;background:#ffffff"></div><div style="left:852px;top:146px;width:78px;height:13px;background:#ffffff"></div><span style="left:771px;top:147px;font-size:11px;line-height:11px;width:78px;text-align:right;letter-spacing:-0.35px;">4.9951</span><span style="left:852px;top:147px;font-size:11px;line-height:11px;width:77px;text-align:right;letter-spacing:-0.35px;">48.2064</span><div style="left:725px;top:160px;width:45px;height:14px;background:#f0f0f0;border:1px solid #a0a0a0;border-top-color:#fff;border-left-color:#fff;"></div><span style="left:725px;top:162px;font-size:11px;line-height:11px;width:42px;text-align:right;">28</span><div style="left:771px;top:161px;width:79px;height:13px;background:#ffffff"></div><div style="left:852px;top:161px;width:78px;height:13px;background:#ffffff"></div><span style="left:771px;top:162px;font-size:11px;line-height:11px;width:78px;text-align:right;letter-spacing:-0.35px;">4.7500</span><span style="left:852px;top:162px;font-size:11px;line-height:11px;width:77px;text-align:right;letter-spacing:-0.35px;">41.4021</span><div style="left:725px;top:175px;width:45px;height:14px;background:#f0f0f0;border:1px solid #a0a0a0;border-top-color:#fff;border-left-color:#fff;"></div><span style="left:725px;top:177px;font-size:11px;line-height:11px;width:42px;text-align:right;">27</span><div style="left:771px;top:176px;width:79px;height:13px;background:#ffffff"></div><div style="left:852px;top:176px;width:78px;height:13px;background:#ffffff"></div><span style="left:771px;top:177px;font-size:11px;line-height:11px;width:78px;text-align:right;letter-spacing:-0.35px;">4.5000</span><span style="left:852px;top:177px;font-size:11px;line-height:11px;width:77px;text-align:right;letter-spacing:-0.35px;">35.3423</span><div style="left:725px;top:190px;width:45px;height:14px;background:#f0f0f0;border:1px solid #a0a0a0;border-top-color:#fff;border-left-color:#fff;"></div><span style="left:725px;top:192px;font-size:11px;line-height:11px;width:42px;text-align:right;">26</span><div style="left:771px;top:191px;width:79px;height:13px;background:#ffffff"></div><div style="left:852px;top:191px;width:78px;height:13px;background:#ffffff"></div><span style="left:771px;top:192px;font-size:11px;line-height:11px;width:78px;text-align:right;letter-spacing:-0.35px;">4.2500</span><span style="left:852px;top:192px;font-size:11px;line-height:11px;width:77px;text-align:right;letter-spacing:-0.35px;">29.9639</span><div style="left:725px;top:205px;width:45px;height:14px;background:#f0f0f0;border:1px solid #a0a0a0;border-top-color:#fff;border-left-color:#fff;"></div><span style="left:725px;top:207px;font-size:11px;line-height:11px;width:42px;text-align:right;">25</span><div style="left:771px;top:206px;width:79px;height:13px;background:#ffffff"></div><div style="left:852px;top:206px;width:78px;height:13px;background:#ffffff"></div><span style="left:771px;top:207px;font-size:11px;line-height:11px;width:78px;text-align:right;letter-spacing:-0.35px;">4.0000</span><span style="left:852px;top:207px;font-size:11px;line-height:11px;width:77px;text-align:right;letter-spacing:-0.35px;">25.2198</span><div style="left:725px;top:220px;width:45px;height:14px;background:#f0f0f0;border:1px solid #a0a0a0;border-top-color:#fff;border-left-color:#fff;"></div><span style="left:725px;top:222px;font-size:11px;line-height:11px;width:42px;text-align:right;">24</span><div style="left:771px;top:221px;width:79px;height:13px;background:#ffffff"></div><div style="left:852px;top:221px;width:78px;height:13px;background:#ffffff"></div><span style="left:771px;top:222px;font-size:11px;line-height:11px;width:78px;text-align:right;letter-spacing:-0.35px;">3.8000</span><span style="left:852px;top:222px;font-size:11px;line-height:11px;width:77px;text-align:right;letter-spacing:-0.35px;">21.8438</span><div style="left:725px;top:235px;width:45px;height:14px;background:#f0f0f0;border:1px solid #a0a0a0;border-top-color:#fff;border-left-color:#fff;"></div><span style="left:725px;top:237px;font-size:11px;line-height:11px;width:42px;text-align:right;">23</span><div style="left:771px;top:236px;width:79px;height:13px;background:#ffffff"></div><div style="left:852px;top:236px;width:78px;height:13px;background:#ffffff"></div><span style="left:771px;top:237px;font-size:11px;line-height:11px;width:78px;text-align:right;letter-spacing:-0.35px;">3.6000</span><span style="left:852px;top:237px;font-size:11px;line-height:11px;width:77px;text-align:right;letter-spacing:-0.35px;">18.8087</span><div style="left:725px;top:250px;width:45px;height:14px;background:#f0f0f0;border:1px solid #a0a0a0;border-top-color:#fff;border-left-color:#fff;"></div><span style="left:725px;top:252px;font-size:11px;line-height:11px;width:42px;text-align:right;">22</span><div style="left:771px;top:251px;width:79px;height:13px;background:#ffffff"></div><div style="left:852px;top:251px;width:78px;height:13px;background:#ffffff"></div><span style="left:771px;top:252px;font-size:11px;line-height:11px;width:78px;text-align:right;letter-spacing:-0.35px;">3.4000</span><span style="left:852px;top:252px;font-size:11px;line-height:11px;width:77px;text-align:right;letter-spacing:-0.35px;">16.3763</span><div style="left:725px;top:265px;width:45px;height:14px;background:#f0f0f0;border:1px solid #a0a0a0;border-top-color:#fff;border-left-color:#fff;"></div><span style="left:725px;top:267px;font-size:11px;line-height:11px;width:42px;text-align:right;">21</span><div style="left:771px;top:266px;width:79px;height:13px;background:#ffffff"></div><div style="left:852px;top:266px;width:78px;height:13px;background:#ffffff"></div><span style="left:771px;top:267px;font-size:11px;line-height:11px;width:78px;text-align:right;letter-spacing:-0.35px;">3.2000</span><span style="left:852px;top:267px;font-size:11px;line-height:11px;width:77px;text-align:right;letter-spacing:-0.35px;">14.1537</span><div style="left:725px;top:280px;width:45px;height:14px;background:#f0f0f0;border:1px solid #a0a0a0;border-top-color:#fff;border-left-color:#fff;"></div><span style="left:725px;top:282px;font-size:11px;line-height:11px;width:42px;text-align:right;">20</span><div style="left:771px;top:281px;width:79px;height:13px;background:#ffffff"></div><div style="left:852px;top:281px;width:78px;height:13px;background:#ffffff"></div><span style="left:771px;top:282px;font-size:11px;line-height:11px;width:78px;text-align:right;letter-spacing:-0.35px;">3.0000</span><span style="left:852px;top:282px;font-size:11px;line-height:11px;width:77px;text-align:right;letter-spacing:-0.35px;">11.6846</span><div style="left:725px;top:295px;width:45px;height:14px;background:#f0f0f0;border:1px solid #a0a0a0;border-top-color:#fff;border-left-color:#fff;"></div><span style="left:725px;top:297px;font-size:11px;line-height:11px;width:42px;text-align:right;">19</span><div style="left:771px;top:296px;width:79px;height:13px;background:#ffffff"></div><div style="left:852px;top:296px;width:78px;height:13px;background:#ffffff"></div><span style="left:771px;top:297px;font-size:11px;line-height:11px;width:78px;text-align:right;letter-spacing:-0.35px;">2.8000</span><span style="left:852px;top:297px;font-size:11px;line-height:11px;width:77px;text-align:right;letter-spacing:-0.35px;">9.8237</span><div style="left:725px;top:310px;width:45px;height:14px;background:#f0f0f0;border:1px solid #a0a0a0;border-top-color:#fff;border-left-color:#fff;"></div><span style="left:725px;top:312px;font-size:11px;line-height:11px;width:42px;text-align:right;">18</span><div style="left:771px;top:311px;width:79px;height:13px;background:#ffffff"></div><div style="left:852px;top:311px;width:78px;height:13px;background:#ffffff"></div><span style="left:771px;top:312px;font-size:11px;line-height:11px;width:78px;text-align:right;letter-spacing:-0.35px;">2.6000</span><span style="left:852px;top:312px;font-size:11px;line-height:11px;width:77px;text-align:right;letter-spacing:-0.35px;">8.0886</span><div style="left:725px;top:325px;width:45px;height:14px;background:#f0f0f0;border:1px solid #a0a0a0;border-top-color:#fff;border-left-color:#fff;"></div><span style="left:725px;top:327px;font-size:11px;line-height:11px;width:42px;text-align:right;">17</span><div style="left:771px;top:326px;width:79px;height:13px;background:#ffffff"></div><div style="left:852px;top:326px;width:78px;height:13px;background:#ffffff"></div><span style="left:771px;top:327px;font-size:11px;line-height:11px;width:78px;text-align:right;letter-spacing:-0.35px;">2.4000</span><span style="left:852px;top:327px;font-size:11px;line-height:11px;width:77px;text-align:right;letter-spacing:-0.35px;">6.6313</span><div style="left:725px;top:340px;width:45px;height:14px;background:#f0f0f0;border:1px solid #a0a0a0;border-top-color:#fff;border-left-color:#fff;"></div><span style="left:725px;top:342px;font-size:11px;line-height:11px;width:42px;text-align:right;">16</span><div style="left:771px;top:341px;width:79px;height:13px;background:#ffffff"></div><div style="left:852px;top:341px;width:78px;height:13px;background:#ffffff"></div><span style="left:771px;top:342px;font-size:11px;line-height:11px;width:78px;text-align:right;letter-spacing:-0.35px;">2.2000</span><span style="left:852px;top:342px;font-size:11px;line-height:11px;width:77px;text-align:right;letter-spacing:-0.35px;">5.2945</span><div style="left:725px;top:355px;width:45px;height:14px;background:#f0f0f0;border:1px solid #a0a0a0;border-top-color:#fff;border-left-color:#fff;"></div><span style="left:725px;top:357px;font-size:11px;line-height:11px;width:42px;text-align:right;">15</span><div style="left:771px;top:356px;width:79px;height:13px;background:#ffffff"></div><div style="left:852px;top:356px;width:78px;height:13px;background:#ffffff"></div><span style="left:771px;top:357px;font-size:11px;line-height:11px;width:78px;text-align:right;letter-spacing:-0.35px;">2.1000</span><span style="left:852px;top:357px;font-size:11px;line-height:11px;width:77px;text-align:right;letter-spacing:-0.35px;">4.7756</span><div style="left:725px;top:370px;width:45px;height:14px;background:#f0f0f0;border:1px solid #a0a0a0;border-top-color:#fff;border-left-color:#fff;"></div><span style="left:725px;top:372px;font-size:11px;line-height:11px;width:42px;text-align:right;">14</span><div style="left:771px;top:371px;width:79px;height:13px;background:#ffffff"></div><div style="left:852px;top:371px;width:78px;height:13px;background:#ffffff"></div><span style="left:771px;top:372px;font-size:11px;line-height:11px;width:78px;text-align:right;letter-spacing:-0.35px;">1.9000</span><span style="left:852px;top:372px;font-size:11px;line-height:11px;width:77px;text-align:right;letter-spacing:-0.35px;">3.7743</span><div style="left:725px;top:385px;width:45px;height:14px;background:#f0f0f0;border:1px solid #a0a0a0;border-top-color:#fff;border-left-color:#fff;"></div><span style="left:725px;top:387px;font-size:11px;line-height:11px;width:42px;text-align:right;">13</span><div style="left:771px;top:386px;width:79px;height:13px;background:#ffffff"></div><div style="left:852px;top:386px;width:78px;height:13px;background:#ffffff"></div><span style="left:771px;top:387px;font-size:11px;line-height:11px;width:78px;text-align:right;letter-spacing:-0.35px;">1.7000</span><span style="left:852px;top:387px;font-size:11px;line-height:11px;width:77px;text-align:right;letter-spacing:-0.35px;">2.9670</span><div style="left:725px;top:400px;width:45px;height:14px;background:#f0f0f0;border:1px solid #a0a0a0;border-top-color:#fff;border-left-color:#fff;"></div><span style="left:725px;top:402px;font-size:11px;line-height:11px;width:42px;text-align:right;">12</span><div style="left:771px;top:401px;width:79px;height:13px;background:#ffffff"></div><div style="left:852px;top:401px;width:78px;height:13px;background:#ffffff"></div><span style="left:771px;top:402px;font-size:11px;line-height:11px;width:78px;text-align:right;letter-spacing:-0.35px;">1.6000</span><span style="left:852px;top:402px;font-size:11px;line-height:11px;width:77px;text-align:right;letter-spacing:-0.35px;">2.5896</span><div style="left:725px;top:415px;width:45px;height:14px;background:#f0f0f0;border:1px solid #a0a0a0;border-top-color:#fff;border-left-color:#fff;"></div><span style="left:725px;top:417px;font-size:11px;line-height:11px;width:42px;text-align:right;">11</span><div style="left:771px;top:416px;width:79px;height:13px;background:#ffffff"></div><div style="left:852px;top:416px;width:78px;height:13px;background:#ffffff"></div><span style="left:771px;top:417px;font-size:11px;line-height:11px;width:78px;text-align:right;letter-spacing:-0.35px;">1.4000</span><span style="left:852px;top:417px;font-size:11px;line-height:11px;width:77px;text-align:right;letter-spacing:-0.35px;">1.9920</span><div style="left:725px;top:430px;width:45px;height:14px;background:#f0f0f0;border:1px solid #a0a0a0;border-top-color:#fff;border-left-color:#fff;"></div><span style="left:725px;top:432px;font-size:11px;line-height:11px;width:42px;text-align:right;">10</span><div style="left:771px;top:431px;width:79px;height:13px;background:#ffffff"></div><div style="left:852px;top:431px;width:78px;height:13px;background:#ffffff"></div><span style="left:771px;top:432px;font-size:11px;line-height:11px;width:78px;text-align:right;letter-spacing:-0.35px;">1.3000</span><span style="left:852px;top:432px;font-size:11px;line-height:11px;width:77px;text-align:right;letter-spacing:-0.35px;">1.7142</span><div style="left:725px;top:445px;width:45px;height:14px;background:#f0f0f0;border:1px solid #a0a0a0;border-top-color:#fff;border-left-color:#fff;"></div><span style="left:725px;top:447px;font-size:11px;line-height:11px;width:42px;text-align:right;">9</span><div style="left:771px;top:446px;width:79px;height:13px;background:#ffffff"></div><div style="left:852px;top:446px;width:78px;height:13px;background:#ffffff"></div><span style="left:771px;top:447px;font-size:11px;line-height:11px;width:78px;text-align:right;letter-spacing:-0.35px;">1.2000</span><span style="left:852px;top:447px;font-size:11px;line-height:11px;width:77px;text-align:right;letter-spacing:-0.35px;">1.4730</span><div style="left:725px;top:460px;width:45px;height:14px;background:#f0f0f0;border:1px solid #a0a0a0;border-top-color:#fff;border-left-color:#fff;"></div><span style="left:725px;top:462px;font-size:11px;line-height:11px;width:42px;text-align:right;">8</span><div style="left:771px;top:461px;width:79px;height:13px;background:#ffffff"></div><div style="left:852px;top:461px;width:78px;height:13px;background:#ffffff"></div><span style="left:771px;top:462px;font-size:11px;line-height:11px;width:78px;text-align:right;letter-spacing:-0.35px;">1.0000</span><span style="left:852px;top:462px;font-size:11px;line-height:11px;width:77px;text-align:right;letter-spacing:-0.35px;">1.0327</span><div style="left:725px;top:475px;width:45px;height:14px;background:#f0f0f0;border:1px solid #a0a0a0;border-top-color:#fff;border-left-color:#fff;"></div><span style="left:725px;top:477px;font-size:11px;line-height:11px;width:42px;text-align:right;">7</span><div style="left:771px;top:476px;width:79px;height:13px;background:#ffffff"></div><div style="left:852px;top:476px;width:78px;height:13px;background:#ffffff"></div><span style="left:771px;top:477px;font-size:11px;line-height:11px;width:78px;text-align:right;letter-spacing:-0.35px;">0.9000</span><span style="left:852px;top:477px;font-size:11px;line-height:11px;width:77px;text-align:right;letter-spacing:-0.35px;">0.8335</span><div style="left:725px;top:490px;width:45px;height:14px;background:#f0f0f0;border:1px solid #a0a0a0;border-top-color:#fff;border-left-color:#fff;"></div><span style="left:725px;top:492px;font-size:11px;line-height:11px;width:42px;text-align:right;">6</span><div style="left:771px;top:491px;width:79px;height:13px;background:#ffffff"></div><div style="left:852px;top:491px;width:78px;height:13px;background:#ffffff"></div><span style="left:771px;top:492px;font-size:11px;line-height:11px;width:78px;text-align:right;letter-spacing:-0.35px;">0.8000</span><span style="left:852px;top:492px;font-size:11px;line-height:11px;width:77px;text-align:right;letter-spacing:-0.35px;">0.6762</span><div style="left:725px;top:505px;width:45px;height:14px;background:#f0f0f0;border:1px solid #a0a0a0;border-top-color:#fff;border-left-color:#fff;"></div><span style="left:725px;top:507px;font-size:11px;line-height:11px;width:42px;text-align:right;">5</span><div style="left:771px;top:506px;width:79px;height:13px;background:#ffffff"></div><div style="left:852px;top:506px;width:78px;height:13px;background:#ffffff"></div><span style="left:771px;top:507px;font-size:11px;line-height:11px;width:78px;text-align:right;letter-spacing:-0.35px;">0.7000</span><span style="left:852px;top:507px;font-size:11px;line-height:11px;width:77px;text-align:right;letter-spacing:-0.35px;">0.5295</span><div style="left:725px;top:520px;width:45px;height:14px;background:#f0f0f0;border:1px solid #a0a0a0;border-top-color:#fff;border-left-color:#fff;"></div><span style="left:725px;top:522px;font-size:11px;line-height:11px;width:42px;text-align:right;">4</span><div style="left:771px;top:521px;width:79px;height:13px;background:#ffffff"></div><div style="left:852px;top:521px;width:78px;height:13px;background:#ffffff"></div><span style="left:771px;top:522px;font-size:11px;line-height:11px;width:78px;text-align:right;letter-spacing:-0.35px;">0.6000</span><span style="left:852px;top:522px;font-size:11px;line-height:11px;width:77px;text-align:right;letter-spacing:-0.35px;">0.4299</span><div style="left:725px;top:535px;width:45px;height:14px;background:#f0f0f0;border:1px solid #a0a0a0;border-top-color:#fff;border-left-color:#fff;"></div><span style="left:725px;top:537px;font-size:11px;line-height:11px;width:42px;text-align:right;">3</span><div style="left:771px;top:536px;width:79px;height:13px;background:#ffffff"></div><div style="left:852px;top:536px;width:78px;height:13px;background:#ffffff"></div><span style="left:771px;top:537px;font-size:11px;line-height:11px;width:78px;text-align:right;letter-spacing:-0.35px;">0.4950</span><span style="left:852px;top:537px;font-size:11px;line-height:11px;width:77px;text-align:right;letter-spacing:-0.35px;">0.3669</span><div style="left:725px;top:550px;width:45px;height:14px;background:#f0f0f0;border:1px solid #a0a0a0;border-top-color:#fff;border-left-color:#fff;"></div><span style="left:725px;top:552px;font-size:11px;line-height:11px;width:42px;text-align:right;">2</span><div style="left:771px;top:551px;width:79px;height:13px;background:#ffffff"></div><div style="left:852px;top:551px;width:78px;height:13px;background:#ffffff"></div><span style="left:771px;top:552px;font-size:11px;line-height:11px;width:78px;text-align:right;letter-spacing:-0.35px;">0.0000</span><span style="left:852px;top:552px;font-size:11px;line-height:11px;width:77px;text-align:right;letter-spacing:-0.35px;">0.3669</span><div style="left:725px;top:565px;width:45px;height:14px;background:#f0f0f0;border:1px solid #a0a0a0;border-top-color:#fff;border-left-color:#fff;"></div><span style="left:725px;top:567px;font-size:11px;line-height:11px;width:42px;text-align:right;">1</span><div style="left:771px;top:566px;width:79px;height:13px;background:#ffffff"></div><div style="left:852px;top:566px;width:78px;height:13px;background:#ffffff"></div><span style="left:771px;top:567px;font-size:11px;line-height:11px;width:78px;text-align:right;letter-spacing:-0.35px;">0.0000</span><span style="left:852px;top:567px;font-size:11px;line-height:11px;width:77px;text-align:right;letter-spacing:-0.35px;">0.3669</span><div style="left:723px;top:580px;width:236px;height:3px;background:#404040"></div><div style="left:771px;top:129px;width:81px;height:16px;background:#d8d8d8;border:1px solid #1a1a1a"></div><span style="left:771px;top:132px;font-size:11px;line-height:11px;width:78px;text-align:right;letter-spacing:-0.35px;">4.9999</span></div><div style="left:1743px;top:168px;width:17px;height:582px;background:#f0f0f0;border-left:1px solid #fff"></div><div style="left:1744px;top:185px;width:15px;height:506px;background:#cdcdcd"></div><svg style="position:absolute;left:1746.0px;top:170.5px;" width="11.0" height="11.0" viewBox="0 0 11.0 11.0"><polyline points="2,7.25 5.5,3.75 9.0,7.25" fill="none" stroke="#505050" stroke-width="2"/></svg><svg style="position:absolute;left:1746.0px;top:736.0px;" width="11.0" height="11.0" viewBox="0 0 11.0 11.0"><polyline points="2,3.75 5.5,7.25 9.0,3.75" fill="none" stroke="#505050" stroke-width="2"/></svg><div style="left:572px;top:750px;width:1171px;height:17px;background:#f0f0f0;border-top:1px solid #fff"></div><div style="left:589px;top:751px;width:1129px;height:15px;background:#cdcdcd"></div><svg style="position:absolute;left:575.0px;top:753.0px;" width="11.0" height="11.0" viewBox="0 0 11.0 11.0"><polyline points="7.25,2 3.75,5.5 7.25,9.0" fill="none" stroke="#505050" stroke-width="2"/></svg><svg style="position:absolute;left:1729.5px;top:753.0px;" width="11.0" height="11.0" viewBox="0 0 11.0 11.0"><polyline points="3.75,2 7.25,5.5 3.75,9.0" fill="none" stroke="#505050" stroke-width="2"/></svg><div style="left:1743px;top:750px;width:17px;height:17px;background:#f0f0f0"></div><div style="left:572px;top:767px;width:1188px;height:1px;background:#2a2a2a"></div><div style="left:573px;top:768px;width:1187px;height:168px;background:#b9d1ea;border-left:1px solid #e8f0f8"></div><div style="left:574px;top:768px;width:1186px;height:31px;background:linear-gradient(#9ab4d2,#b8d0ea);border-top:1px solid #e8f0f8"></div><div style="left:1759px;top:768px;width:1px;height:168px;background:#3cc8f0"></div><div style="left:573px;top:935px;width:1187px;height:1px;background:#3cc8f0"></div><span style="left:580.3px;top:779px;font-size:15px;line-height:15px;letter-spacing:-0.251px;">Parameter Comments</span><div style="left:1733px;top:778px;width:16px;height:16px;background:#c75050"></div><svg style="position:absolute;left:1737px;top:783px;" width="8" height="8" viewBox="0 0 8 8"><path d="M1.5 1.5l5 5M6.5 1.5l-5 5" stroke="#fff" stroke-width="1.8"/></svg><div style="left:580px;top:799px;width:1172px;height:130px;background:#f0f0f0"></div><div style="left:581px;top:799px;width:1168px;height:108px;background:#fff;border:1px solid #828790"></div><span style="left:586.6px;top:803.5px;font-size:11px;line-height:11px;letter-spacing:-0.155px;">Maximum injector value for the Fuel Injector Scalars is 46.93 LBS/hr and a 64 LBS/min MAF Transfer for this ECU.</span><span style="left:586.6px;top:829.5px;font-size:11px;line-height:11px;letter-spacing:-0.085px;">This value should match your Scaling Multiplier almost exactly for fueling to be accurate after plugging in all of your Scaling factors.</span><span style="left:586.6px;top:855.5px;font-size:11px;line-height:11px;letter-spacing:-0.179px;">It is the Forumula: AHISL / ALOSL * MAF Transfer / XTALHPS</span><span style="left:586.6px;top:894px;font-size:11px;line-height:11px;letter-spacing:-0.142px;">**Reference Only, DO NOT EDIT DIRECTLY IF SCALED!!**</span><div style="left:1732px;top:800px;width:16px;height:106px;background:#f0f0f0"></div><svg style="position:absolute;left:1734.5px;top:804.5px;" width="11.0" height="11.0" viewBox="0 0 11.0 11.0"><polyline points="2,7.25 5.5,3.75 9.0,7.25" fill="none" stroke="#c0c0c0" stroke-width="2"/></svg><svg style="position:absolute;left:1734.5px;top:891.5px;" width="11.0" height="11.0" viewBox="0 0 11.0 11.0"><polyline points="2,3.75 5.5,7.25 9.0,3.75" fill="none" stroke="#c0c0c0" stroke-width="2"/></svg><div style="left:581px;top:907px;width:116px;height:22px;background:#fff;border-left:1px solid #a0a0a0"></div><span style="left:588px;top:913px;font-size:11px;line-height:11px;letter-spacing:-0.327px;">Parameter Comments</span><div style="left:697px;top:908px;width:106px;height:20px;background:linear-gradient(#f2f2f2,#e8e8e8);border:1px solid #a8a8a8;border-bottom:none"></div><span style="left:702px;top:912px;font-size:11px;line-height:11px;letter-spacing:-0.270px;">Parameter Summary</span><div style="left:161px;top:936px;width:1599px;height:1px;background:#2a2a2a"></div><div style="left:161px;top:937px;width:1599px;height:21px;background:#f0f0f0"></div><div style="left:162px;top:939px;width:87px;height:19px;background:#ff0000;border-top:1px solid #303030;border-left:1px solid #303030"></div><span style="left:166.5px;top:942px;font-size:12px;line-height:12px;color:#fff;letter-spacing:0.033px;">Not Emulating</span><span style="left:293.3px;top:944px;font-size:12px;line-height:12px;letter-spacing:-0.038px;">Hardware Not Found</span><div style="left:444px;top:939px;width:1px;height:19px;background:#c8c8c8"></div><div style="left:447px;top:939px;width:102px;height:19px;border-top:1px solid #a0a0a0;border-left:1px solid #a0a0a0"></div><div style="left:553px;top:939px;width:131px;height:19px;background:#ffff00;border:1px solid #1a1a1a;border-bottom:none;border-top-width:2px"></div><span style="left:572.5px;top:944px;font-size:12px;line-height:12px;letter-spacing:-0.699px;">DA: Not Connected</span><span style="left:689px;top:944px;font-size:12px;line-height:12px;letter-spacing:-0.379px;">Scalar, Offset: 18438,  Size: 8 Bit</span></body></html>
